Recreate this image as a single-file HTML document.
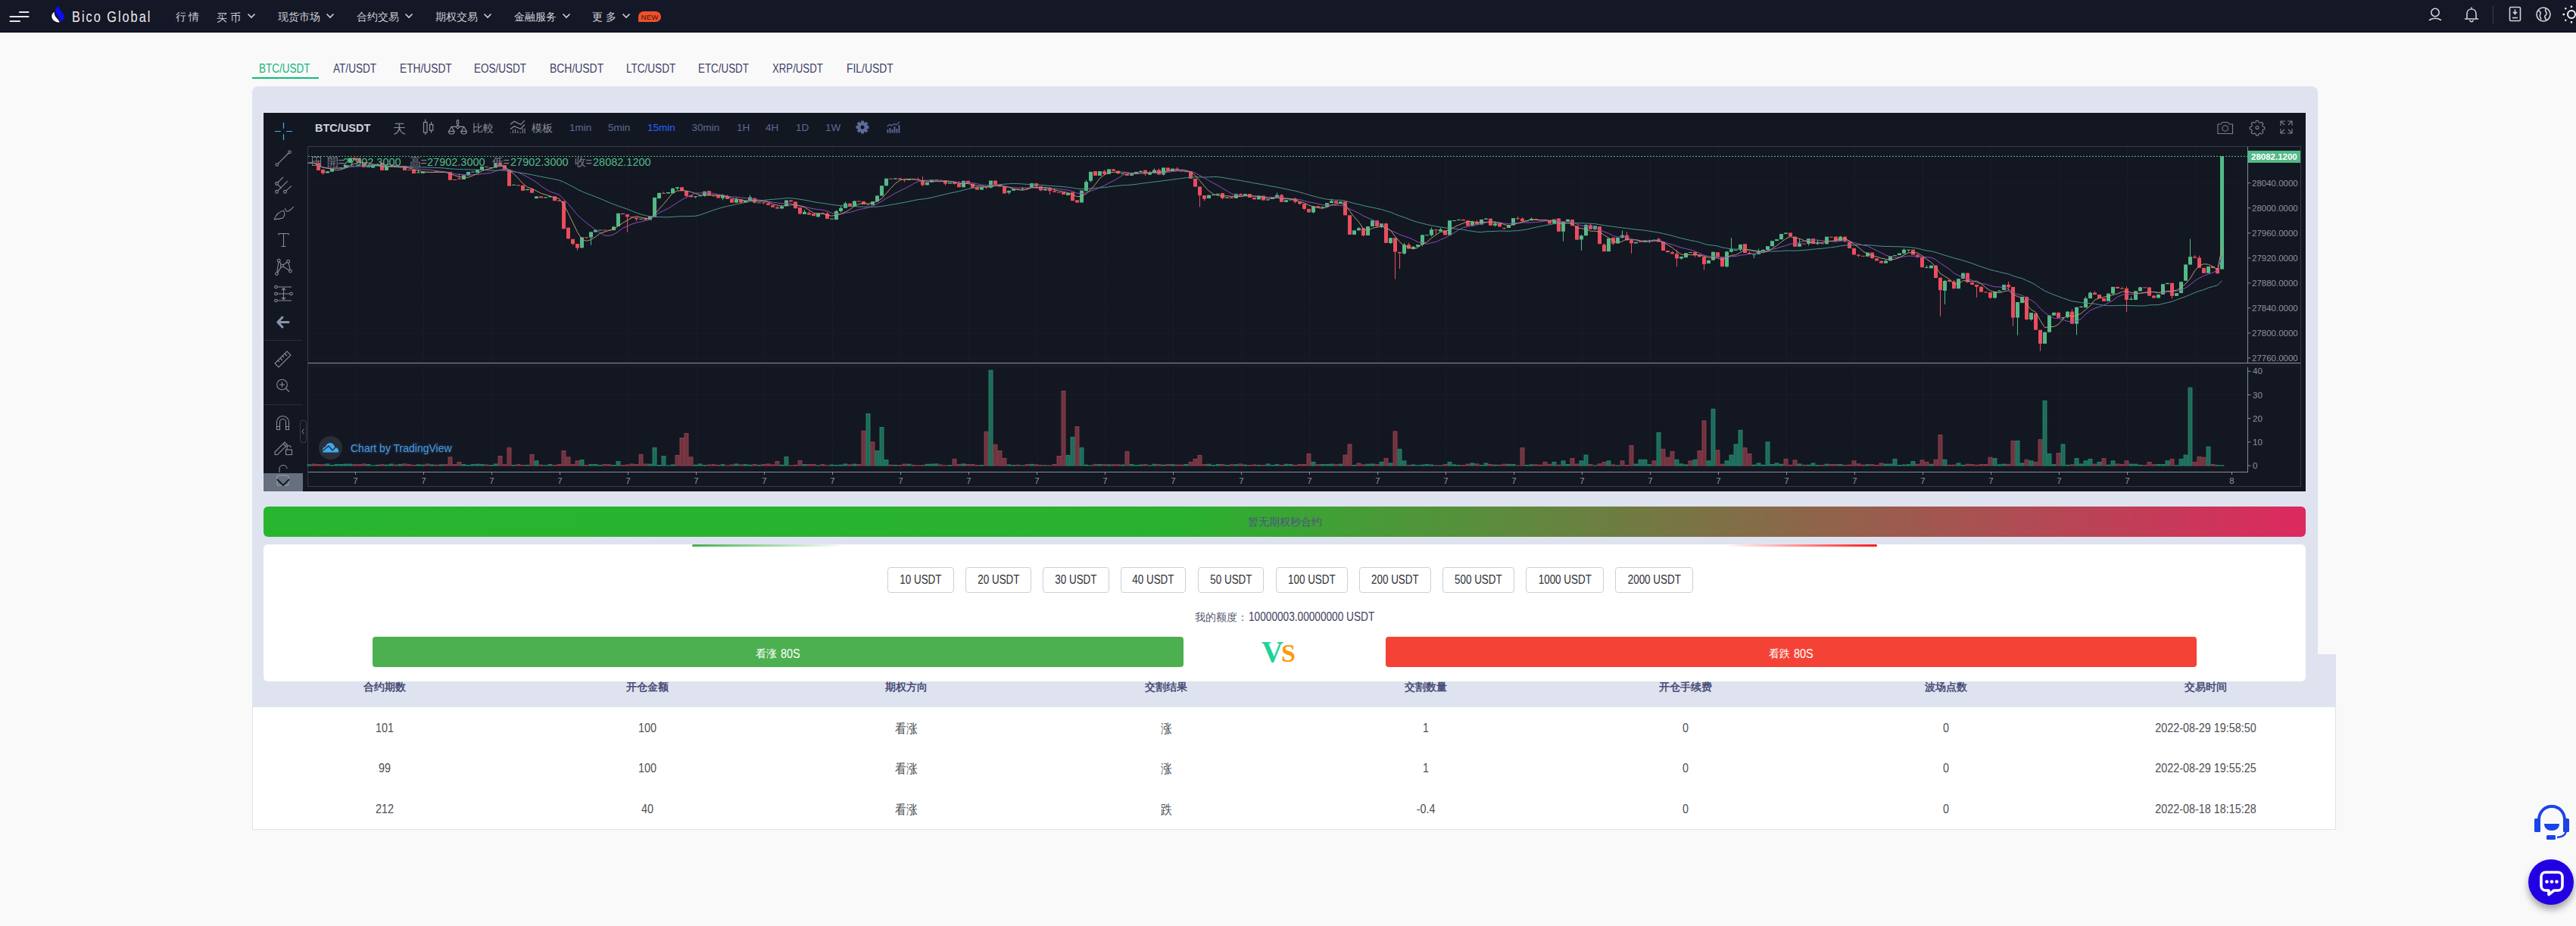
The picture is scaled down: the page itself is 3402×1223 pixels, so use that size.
<!DOCTYPE html><html><head><meta charset="utf-8"><title>Bico Global</title><style>
*{margin:0;padding:0;box-sizing:content-box}
html,body{width:3402px;height:1223px;overflow:hidden;background:#f9f9f9}
body{position:relative;font-family:"Liberation Sans",sans-serif}
#hdr{position:absolute;left:0;top:0;width:3402px;height:42px;background:#141726;border-bottom:1px solid #020514;box-shadow:0 1px 0 #ffffff}
.t{position:absolute;white-space:nowrap;line-height:1.2}
.nav{font-size:14px;color:#cdcfd4}
.tab{top:81px;font-size:13.5px}
.btn{position:absolute;top:749px;height:32px;border:1px solid #cdd0da;border-radius:4px;font-size:16px;line-height:32px;text-align:center;color:#2f3136;white-space:nowrap}
.btn span{display:inline-block;transform:scaleX(0.84)}
.bigbtn{position:absolute;top:841px;height:40px;border-radius:4px;color:#fff;font-size:14px;line-height:39px;text-align:center;white-space:nowrap}
.th{position:absolute;top:899px;font-size:14px;font-weight:bold;color:#4a4e78;white-space:nowrap;transform:translateX(-50%)}
.td{position:absolute;font-size:16.5px;color:#4e5056;white-space:nowrap;transform:translateX(-50%) scaleX(0.87)}
</style></head><body><div id="hdr"><svg style="position:absolute;left:12px;top:14px" width="27" height="16" viewBox="0 0 27 16"><g stroke="#e6e6e6" stroke-width="2.2" stroke-linecap="round"><path d="M14 2H25.5"/><path d="M1.5 8H25.5"/><path d="M1.5 14H14"/></g></svg><svg style="position:absolute;left:60px;top:2px" width="40" height="40" viewBox="0 0 40 40"><path d="M17.3 5.6C14 8 12.5 11 13.3 14C14 17 18 20 19 23.5C19.5 25 19.2 26.5 19 27.2C22 26 25.5 23 24.8 19.5C24 16 18.5 12 17.3 5.6Z" fill="#0d0dfa"/><path d="M11.7 13.8C9 15.5 8 18 8.4 20.5C9 24.5 13 27.5 18.5 27.6C18.3 25.5 16.5 23.5 14.5 21.5C12.5 19.5 11.5 17 11.7 13.8Z" fill="#ffffff"/></svg><svg style="position:absolute;left:326px;top:17px" width="12" height="8" viewBox="0 0 12 8"><path d="M1.5 1.5L6 6L10.5 1.5" fill="none" stroke="#cfd0d4" stroke-width="1.6"/></svg><svg style="position:absolute;left:430px;top:17px" width="12" height="8" viewBox="0 0 12 8"><path d="M1.5 1.5L6 6L10.5 1.5" fill="none" stroke="#cfd0d4" stroke-width="1.6"/></svg><svg style="position:absolute;left:534px;top:17px" width="12" height="8" viewBox="0 0 12 8"><path d="M1.5 1.5L6 6L10.5 1.5" fill="none" stroke="#cfd0d4" stroke-width="1.6"/></svg><svg style="position:absolute;left:638px;top:17px" width="12" height="8" viewBox="0 0 12 8"><path d="M1.5 1.5L6 6L10.5 1.5" fill="none" stroke="#cfd0d4" stroke-width="1.6"/></svg><svg style="position:absolute;left:742px;top:17px" width="12" height="8" viewBox="0 0 12 8"><path d="M1.5 1.5L6 6L10.5 1.5" fill="none" stroke="#cfd0d4" stroke-width="1.6"/></svg><svg style="position:absolute;left:821px;top:17px" width="12" height="8" viewBox="0 0 12 8"><path d="M1.5 1.5L6 6L10.5 1.5" fill="none" stroke="#cfd0d4" stroke-width="1.6"/></svg><div style="position:absolute;left:843px;top:15px;width:30px;height:14px;background:#f0502a;border-radius:7px 7px 7px 1px;font:9.5px/15.5px 'Liberation Sans',sans-serif;color:#3a140c;text-align:center;letter-spacing:0.2px">NEW</div><svg style="position:absolute;left:3205px;top:8px" width="22" height="22" viewBox="0 0 22 22"><circle cx="11" cy="8.5" r="5.2" fill="none" stroke="#d2d2d2" stroke-width="1.6" stroke-width="1.8"/><path d="M3.5 18.5C7.5 15.5 14.5 15.5 18.5 18.5" fill="none" stroke="#d2d2d2" stroke-width="1.6" stroke-width="1.8" stroke-linecap="round"/></svg><svg style="position:absolute;left:3253px;top:8px" width="22" height="22" viewBox="0 0 22 22"><path d="M5 17V10C5 6 8 4 11 4C14 4 17 6 17 10V17" fill="none" stroke="#d2d2d2" stroke-width="1.6"/><path d="M2.5 17H19.5" fill="none" stroke="#d2d2d2" stroke-width="1.6" stroke-linecap="round"/><path d="M8.5 18.5C9 20 10 20.7 11 20.7C12 20.7 13 20 13.5 18.5" fill="none" stroke="#d2d2d2" stroke-width="1.6"/><circle cx="11" cy="2.5" r="1" fill="#d2d2d2"/></svg><div style="position:absolute;left:3292px;top:7px;width:1px;height:24px;background:#3a3d4d"></div><svg style="position:absolute;left:3312px;top:8px" width="20" height="22" viewBox="0 0 20 22"><rect x="2.5" y="1.5" width="14" height="18" rx="1.5" fill="none" stroke="#d2d2d2" stroke-width="1.6"/><path d="M6 15.5H13" fill="none" stroke="#d2d2d2" stroke-width="1.6"/><path d="M9.5 4.5V10M7 7.8L9.5 10.5L12 7.8" fill="none" stroke="#d2d2d2" stroke-width="1.6"/></svg><svg style="position:absolute;left:3348px;top:8px" width="22" height="22" viewBox="0 0 22 22"><circle cx="11" cy="11" r="9" fill="none" stroke="#d2d2d2" stroke-width="1.6"/><path d="M4 6C7 7 8 9 6.5 11.5C5.5 13.5 7 15 8 17.5" fill="none" stroke="#d2d2d2" stroke-width="1.6"/><path d="M14.5 2.8C13 5 13.5 7 15 8.5C16 9.5 14.5 12 13 13C12 15 14 17 15.5 19" fill="none" stroke="#d2d2d2" stroke-width="1.6"/></svg><svg style="position:absolute;left:3384px;top:7px" width="24" height="24" viewBox="0 0 24 24"><circle cx="12" cy="12" r="5" fill="none" stroke="#f0f0f0" stroke-width="2"/><g fill="#f0f0f0"><rect x="10.8" y="0.5" width="2.4" height="2.6" rx="0.6"/><rect x="10.8" y="20.9" width="2.4" height="2.6" rx="0.6"/><rect x="0.5" y="10.8" width="2.6" height="2.4" rx="0.6"/><rect x="20.9" y="10.8" width="2.6" height="2.4" rx="0.6"/><circle cx="4.3" cy="4.3" r="1.2"/><circle cx="19.7" cy="4.3" r="1.2"/><circle cx="4.3" cy="19.7" r="1.2"/><circle cx="19.7" cy="19.7" r="1.2"/></g></svg></div><div style="position:absolute;left:333px;top:102px;width:88px;height:2px;background:#0ebc7a"></div><div style="position:absolute;left:333px;top:114px;width:2728px;height:750px;background:#dfe3ef;border-radius:8px 8px 0 0"></div><div style="position:absolute;left:347px;top:148px;width:2699px;height:502px;background:#e8ebf6"></div><div style="position:absolute;left:333px;top:864px;width:2752px;height:70px;background:#dfe3ef"></div><div style="position:absolute;left:333px;top:934px;width:2750px;height:161px;background:#fff;border:1px solid #dfe3ef;border-top:none"></div><svg id="chart" width="2697" height="500" viewBox="348 149 2697 500" style="position:absolute;left:348px;top:149px"><rect x="348" y="149" width="2697" height="500" fill="#131722"/><path d="M469.5 194V623 M559.5 194V623 M649.5 194V623 M739.5 194V623 M829.5 194V623 M919.5 194V623 M1009.5 194V623 M1099.5 194V623 M1189.5 194V623 M1279.5 194V623 M1369.5 194V623 M1459.5 194V623 M1549.5 194V623 M1639.5 194V623 M1729.5 194V623 M1819.5 194V623 M1909.5 194V623 M1999.5 194V623 M2089.5 194V623 M2179.5 194V623 M2269.5 194V623 M2359.5 194V623 M2449.5 194V623 M2539.5 194V623 M2629.5 194V623 M2719.5 194V623 M2809.5 194V623 M2899.5 194V623 M407 241.7H2968 M407 274.7H2968 M407 307.8H2968 M407 340.8H2968 M407 373.8H2968 M407 406.8H2968 M407 439.9H2968 M407 472.9H2968 M407 490.3H2968 M407 521.5H2968 M407 552.6H2968 M407 583.8H2968" stroke="#181c28" stroke-width="1"/><rect x="406.5" y="193.5" width="2632" height="449" fill="none" stroke="#363a48" stroke-width="1"/><path d="M2968.5 194V623.5" stroke="#8a8d96" stroke-width="1"/><path d="M407 623.5H2968.5" stroke="#8a8d96" stroke-width="1"/><path d="M407 479.5H3038" stroke="#8f929b" stroke-width="1"/><rect x="407" y="480" width="2631" height="5" fill="#171b27"/><path d="M407 206.5H2968" stroke="#53b987" stroke-width="1" stroke-dasharray="2 2"/><g><rect x="406.0" y="613.8" width="5" height="1.2" fill="#1d6b59" stroke="#2a9273" stroke-width="0.8"/><rect x="412.0" y="613.0" width="5" height="2.0" fill="#6d3340" stroke="#a2454f" stroke-width="0.8"/><rect x="418.0" y="613.5" width="5" height="1.5" fill="#6d3340" stroke="#a2454f" stroke-width="0.8"/><rect x="424.0" y="613.7" width="5" height="1.3" fill="#6d3340" stroke="#a2454f" stroke-width="0.8"/><rect x="430.0" y="612.9" width="5" height="2.1" fill="#1d6b59" stroke="#2a9273" stroke-width="0.8"/><rect x="436.0" y="614.6" width="5" height="0.4" fill="#1d6b59" stroke="#2a9273" stroke-width="0.8"/><rect x="442.0" y="613.3" width="5" height="1.7" fill="#1d6b59" stroke="#2a9273" stroke-width="0.8"/><rect x="448.0" y="613.5" width="5" height="1.5" fill="#1d6b59" stroke="#2a9273" stroke-width="0.8"/><rect x="454.0" y="613.0" width="5" height="2.0" fill="#1d6b59" stroke="#2a9273" stroke-width="0.8"/><rect x="460.0" y="613.1" width="5" height="1.9" fill="#1d6b59" stroke="#2a9273" stroke-width="0.8"/><rect x="466.0" y="613.7" width="5" height="1.3" fill="#6d3340" stroke="#a2454f" stroke-width="0.8"/><rect x="472.0" y="613.4" width="5" height="1.6" fill="#6d3340" stroke="#a2454f" stroke-width="0.8"/><rect x="478.0" y="612.9" width="5" height="2.1" fill="#6d3340" stroke="#a2454f" stroke-width="0.8"/><rect x="484.0" y="613.5" width="5" height="1.5" fill="#1d6b59" stroke="#2a9273" stroke-width="0.8"/><rect x="490.0" y="614.8" width="5" height="0.2" fill="#1d6b59" stroke="#2a9273" stroke-width="0.8"/><rect x="496.0" y="614.2" width="5" height="0.8" fill="#1d6b59" stroke="#2a9273" stroke-width="0.8"/><rect x="502.0" y="613.3" width="5" height="1.7" fill="#6d3340" stroke="#a2454f" stroke-width="0.8"/><rect x="508.0" y="614.1" width="5" height="0.9" fill="#1d6b59" stroke="#2a9273" stroke-width="0.8"/><rect x="514.0" y="613.0" width="5" height="2.0" fill="#1d6b59" stroke="#2a9273" stroke-width="0.8"/><rect x="520.0" y="614.0" width="5" height="1.0" fill="#6d3340" stroke="#a2454f" stroke-width="0.8"/><rect x="526.0" y="613.3" width="5" height="1.7" fill="#1d6b59" stroke="#2a9273" stroke-width="0.8"/><rect x="532.0" y="612.8" width="5" height="2.2" fill="#6d3340" stroke="#a2454f" stroke-width="0.8"/><rect x="538.0" y="613.6" width="5" height="1.4" fill="#6d3340" stroke="#a2454f" stroke-width="0.8"/><rect x="544.0" y="614.4" width="5" height="0.6" fill="#6d3340" stroke="#a2454f" stroke-width="0.8"/><rect x="550.0" y="613.8" width="5" height="1.2" fill="#1d6b59" stroke="#2a9273" stroke-width="0.8"/><rect x="556.0" y="614.1" width="5" height="0.9" fill="#1d6b59" stroke="#2a9273" stroke-width="0.8"/><rect x="562.0" y="612.9" width="5" height="2.1" fill="#6d3340" stroke="#a2454f" stroke-width="0.8"/><rect x="568.0" y="613.9" width="5" height="1.1" fill="#1d6b59" stroke="#2a9273" stroke-width="0.8"/><rect x="574.0" y="614.2" width="5" height="0.8" fill="#6d3340" stroke="#a2454f" stroke-width="0.8"/><rect x="580.0" y="613.8" width="5" height="1.2" fill="#1d6b59" stroke="#2a9273" stroke-width="0.8"/><rect x="586.0" y="613.4" width="5" height="1.6" fill="#6d3340" stroke="#a2454f" stroke-width="0.8"/><rect x="592.0" y="603.8" width="5" height="11.2" fill="#6d3340" stroke="#a2454f" stroke-width="0.8"/><rect x="598.0" y="613.6" width="5" height="1.4" fill="#6d3340" stroke="#a2454f" stroke-width="0.8"/><rect x="604.0" y="610.3" width="5" height="4.7" fill="#6d3340" stroke="#a2454f" stroke-width="0.8"/><rect x="610.0" y="613.5" width="5" height="1.5" fill="#1d6b59" stroke="#2a9273" stroke-width="0.8"/><rect x="616.0" y="614.4" width="5" height="0.6" fill="#1d6b59" stroke="#2a9273" stroke-width="0.8"/><rect x="622.0" y="613.5" width="5" height="1.5" fill="#1d6b59" stroke="#2a9273" stroke-width="0.8"/><rect x="628.0" y="613.1" width="5" height="1.9" fill="#1d6b59" stroke="#2a9273" stroke-width="0.8"/><rect x="634.0" y="613.3" width="5" height="1.7" fill="#1d6b59" stroke="#2a9273" stroke-width="0.8"/><rect x="640.0" y="613.9" width="5" height="1.1" fill="#6d3340" stroke="#a2454f" stroke-width="0.8"/><rect x="646.0" y="614.5" width="5" height="0.5" fill="#1d6b59" stroke="#2a9273" stroke-width="0.8"/><rect x="652.0" y="612.9" width="5" height="2.1" fill="#1d6b59" stroke="#2a9273" stroke-width="0.8"/><rect x="658.0" y="602.5" width="5" height="12.5" fill="#6d3340" stroke="#a2454f" stroke-width="0.8"/><rect x="664.0" y="613.7" width="5" height="1.3" fill="#6d3340" stroke="#a2454f" stroke-width="0.8"/><rect x="670.0" y="591.3" width="5" height="23.7" fill="#6d3340" stroke="#a2454f" stroke-width="0.8"/><rect x="676.0" y="614.5" width="5" height="0.5" fill="#1d6b59" stroke="#2a9273" stroke-width="0.8"/><rect x="682.0" y="613.3" width="5" height="1.7" fill="#6d3340" stroke="#a2454f" stroke-width="0.8"/><rect x="688.0" y="614.4" width="5" height="0.6" fill="#6d3340" stroke="#a2454f" stroke-width="0.8"/><rect x="694.0" y="614.3" width="5" height="0.7" fill="#1d6b59" stroke="#2a9273" stroke-width="0.8"/><rect x="700.0" y="600.3" width="5" height="14.7" fill="#6d3340" stroke="#a2454f" stroke-width="0.8"/><rect x="706.0" y="608.8" width="5" height="6.2" fill="#1d6b59" stroke="#2a9273" stroke-width="0.8"/><rect x="712.0" y="614.1" width="5" height="0.9" fill="#6d3340" stroke="#a2454f" stroke-width="0.8"/><rect x="718.0" y="614.7" width="5" height="0.3" fill="#1d6b59" stroke="#2a9273" stroke-width="0.8"/><rect x="724.0" y="613.6" width="5" height="1.4" fill="#1d6b59" stroke="#2a9273" stroke-width="0.8"/><rect x="730.0" y="614.6" width="5" height="0.4" fill="#6d3340" stroke="#a2454f" stroke-width="0.8"/><rect x="736.0" y="613.5" width="5" height="1.5" fill="#6d3340" stroke="#a2454f" stroke-width="0.8"/><rect x="742.0" y="595.4" width="5" height="19.6" fill="#6d3340" stroke="#a2454f" stroke-width="0.8"/><rect x="748.0" y="603.8" width="5" height="11.2" fill="#6d3340" stroke="#a2454f" stroke-width="0.8"/><rect x="754.0" y="613.4" width="5" height="1.6" fill="#6d3340" stroke="#a2454f" stroke-width="0.8"/><rect x="760.0" y="608.8" width="5" height="6.2" fill="#6d3340" stroke="#a2454f" stroke-width="0.8"/><rect x="766.0" y="607.5" width="5" height="7.5" fill="#1d6b59" stroke="#2a9273" stroke-width="0.8"/><rect x="772.0" y="614.6" width="5" height="0.4" fill="#6d3340" stroke="#a2454f" stroke-width="0.8"/><rect x="778.0" y="613.5" width="5" height="1.5" fill="#1d6b59" stroke="#2a9273" stroke-width="0.8"/><rect x="784.0" y="613.4" width="5" height="1.6" fill="#1d6b59" stroke="#2a9273" stroke-width="0.8"/><rect x="790.0" y="614.6" width="5" height="0.4" fill="#1d6b59" stroke="#2a9273" stroke-width="0.8"/><rect x="796.0" y="613.4" width="5" height="1.6" fill="#6d3340" stroke="#a2454f" stroke-width="0.8"/><rect x="802.0" y="613.7" width="5" height="1.3" fill="#6d3340" stroke="#a2454f" stroke-width="0.8"/><rect x="808.0" y="614.4" width="5" height="0.6" fill="#1d6b59" stroke="#2a9273" stroke-width="0.8"/><rect x="814.0" y="609.4" width="5" height="5.6" fill="#1d6b59" stroke="#2a9273" stroke-width="0.8"/><rect x="820.0" y="614.6" width="5" height="0.4" fill="#6d3340" stroke="#a2454f" stroke-width="0.8"/><rect x="826.0" y="614.0" width="5" height="1.0" fill="#6d3340" stroke="#a2454f" stroke-width="0.8"/><rect x="832.0" y="612.9" width="5" height="2.1" fill="#6d3340" stroke="#a2454f" stroke-width="0.8"/><rect x="838.0" y="613.5" width="5" height="1.5" fill="#6d3340" stroke="#a2454f" stroke-width="0.8"/><rect x="844.0" y="600.3" width="5" height="14.7" fill="#6d3340" stroke="#a2454f" stroke-width="0.8"/><rect x="850.0" y="612.9" width="5" height="2.1" fill="#6d3340" stroke="#a2454f" stroke-width="0.8"/><rect x="856.0" y="613.1" width="5" height="1.9" fill="#1d6b59" stroke="#2a9273" stroke-width="0.8"/><rect x="862.0" y="591.3" width="5" height="23.7" fill="#1d6b59" stroke="#2a9273" stroke-width="0.8"/><rect x="868.0" y="614.4" width="5" height="0.6" fill="#1d6b59" stroke="#2a9273" stroke-width="0.8"/><rect x="874.0" y="602.5" width="5" height="12.5" fill="#1d6b59" stroke="#2a9273" stroke-width="0.8"/><rect x="880.0" y="614.8" width="5" height="0.2" fill="#1d6b59" stroke="#2a9273" stroke-width="0.8"/><rect x="886.0" y="613.9" width="5" height="1.1" fill="#1d6b59" stroke="#2a9273" stroke-width="0.8"/><rect x="892.0" y="601.3" width="5" height="13.7" fill="#6d3340" stroke="#a2454f" stroke-width="0.8"/><rect x="898.0" y="578.5" width="5" height="36.5" fill="#6d3340" stroke="#a2454f" stroke-width="0.8"/><rect x="904.0" y="572.6" width="5" height="42.4" fill="#6d3340" stroke="#a2454f" stroke-width="0.8"/><rect x="910.0" y="603.8" width="5" height="11.2" fill="#6d3340" stroke="#a2454f" stroke-width="0.8"/><rect x="916.0" y="614.2" width="5" height="0.8" fill="#1d6b59" stroke="#2a9273" stroke-width="0.8"/><rect x="922.0" y="612.9" width="5" height="2.1" fill="#1d6b59" stroke="#2a9273" stroke-width="0.8"/><rect x="928.0" y="614.5" width="5" height="0.5" fill="#1d6b59" stroke="#2a9273" stroke-width="0.8"/><rect x="934.0" y="613.9" width="5" height="1.1" fill="#6d3340" stroke="#a2454f" stroke-width="0.8"/><rect x="940.0" y="613.7" width="5" height="1.3" fill="#6d3340" stroke="#a2454f" stroke-width="0.8"/><rect x="946.0" y="614.3" width="5" height="0.7" fill="#6d3340" stroke="#a2454f" stroke-width="0.8"/><rect x="952.0" y="613.7" width="5" height="1.3" fill="#1d6b59" stroke="#2a9273" stroke-width="0.8"/><rect x="958.0" y="614.8" width="5" height="0.2" fill="#6d3340" stroke="#a2454f" stroke-width="0.8"/><rect x="964.0" y="613.9" width="5" height="1.1" fill="#6d3340" stroke="#a2454f" stroke-width="0.8"/><rect x="970.0" y="612.9" width="5" height="2.1" fill="#1d6b59" stroke="#2a9273" stroke-width="0.8"/><rect x="976.0" y="613.9" width="5" height="1.1" fill="#6d3340" stroke="#a2454f" stroke-width="0.8"/><rect x="982.0" y="613.3" width="5" height="1.7" fill="#1d6b59" stroke="#2a9273" stroke-width="0.8"/><rect x="988.0" y="614.2" width="5" height="0.8" fill="#1d6b59" stroke="#2a9273" stroke-width="0.8"/><rect x="994.0" y="613.3" width="5" height="1.7" fill="#6d3340" stroke="#a2454f" stroke-width="0.8"/><rect x="1000.0" y="614.3" width="5" height="0.7" fill="#1d6b59" stroke="#2a9273" stroke-width="0.8"/><rect x="1006.0" y="613.5" width="5" height="1.5" fill="#6d3340" stroke="#a2454f" stroke-width="0.8"/><rect x="1012.0" y="612.9" width="5" height="2.1" fill="#6d3340" stroke="#a2454f" stroke-width="0.8"/><rect x="1018.0" y="613.9" width="5" height="1.1" fill="#6d3340" stroke="#a2454f" stroke-width="0.8"/><rect x="1024.0" y="609.4" width="5" height="5.6" fill="#6d3340" stroke="#a2454f" stroke-width="0.8"/><rect x="1030.0" y="614.2" width="5" height="0.8" fill="#1d6b59" stroke="#2a9273" stroke-width="0.8"/><rect x="1036.0" y="603.5" width="5" height="11.5" fill="#1d6b59" stroke="#2a9273" stroke-width="0.8"/><rect x="1042.0" y="614.7" width="5" height="0.3" fill="#6d3340" stroke="#a2454f" stroke-width="0.8"/><rect x="1048.0" y="614.3" width="5" height="0.7" fill="#6d3340" stroke="#a2454f" stroke-width="0.8"/><rect x="1054.0" y="608.5" width="5" height="6.5" fill="#6d3340" stroke="#a2454f" stroke-width="0.8"/><rect x="1060.0" y="613.4" width="5" height="1.6" fill="#1d6b59" stroke="#2a9273" stroke-width="0.8"/><rect x="1066.0" y="613.4" width="5" height="1.6" fill="#6d3340" stroke="#a2454f" stroke-width="0.8"/><rect x="1072.0" y="613.5" width="5" height="1.5" fill="#6d3340" stroke="#a2454f" stroke-width="0.8"/><rect x="1078.0" y="614.7" width="5" height="0.3" fill="#1d6b59" stroke="#2a9273" stroke-width="0.8"/><rect x="1084.0" y="613.3" width="5" height="1.7" fill="#6d3340" stroke="#a2454f" stroke-width="0.8"/><rect x="1090.0" y="614.8" width="5" height="0.2" fill="#6d3340" stroke="#a2454f" stroke-width="0.8"/><rect x="1096.0" y="614.0" width="5" height="1.0" fill="#1d6b59" stroke="#2a9273" stroke-width="0.8"/><rect x="1102.0" y="614.6" width="5" height="0.4" fill="#1d6b59" stroke="#2a9273" stroke-width="0.8"/><rect x="1108.0" y="614.1" width="5" height="0.9" fill="#1d6b59" stroke="#2a9273" stroke-width="0.8"/><rect x="1114.0" y="612.9" width="5" height="2.1" fill="#1d6b59" stroke="#2a9273" stroke-width="0.8"/><rect x="1120.0" y="613.8" width="5" height="1.2" fill="#6d3340" stroke="#a2454f" stroke-width="0.8"/><rect x="1126.0" y="613.0" width="5" height="2.0" fill="#1d6b59" stroke="#2a9273" stroke-width="0.8"/><rect x="1132.0" y="613.5" width="5" height="1.5" fill="#6d3340" stroke="#a2454f" stroke-width="0.8"/><rect x="1138.0" y="569.2" width="5" height="45.8" fill="#6d3340" stroke="#a2454f" stroke-width="0.8"/><rect x="1144.0" y="546.4" width="5" height="68.6" fill="#1d6b59" stroke="#2a9273" stroke-width="0.8"/><rect x="1150.0" y="583.8" width="5" height="31.2" fill="#6d3340" stroke="#a2454f" stroke-width="0.8"/><rect x="1156.0" y="595.4" width="5" height="19.6" fill="#1d6b59" stroke="#2a9273" stroke-width="0.8"/><rect x="1162.0" y="564.5" width="5" height="50.5" fill="#1d6b59" stroke="#2a9273" stroke-width="0.8"/><rect x="1168.0" y="607.5" width="5" height="7.5" fill="#1d6b59" stroke="#2a9273" stroke-width="0.8"/><rect x="1174.0" y="614.1" width="5" height="0.9" fill="#6d3340" stroke="#a2454f" stroke-width="0.8"/><rect x="1180.0" y="614.4" width="5" height="0.6" fill="#1d6b59" stroke="#2a9273" stroke-width="0.8"/><rect x="1186.0" y="614.6" width="5" height="0.4" fill="#6d3340" stroke="#a2454f" stroke-width="0.8"/><rect x="1192.0" y="613.0" width="5" height="2.0" fill="#6d3340" stroke="#a2454f" stroke-width="0.8"/><rect x="1198.0" y="613.1" width="5" height="1.9" fill="#1d6b59" stroke="#2a9273" stroke-width="0.8"/><rect x="1204.0" y="614.3" width="5" height="0.7" fill="#6d3340" stroke="#a2454f" stroke-width="0.8"/><rect x="1210.0" y="614.7" width="5" height="0.3" fill="#6d3340" stroke="#a2454f" stroke-width="0.8"/><rect x="1216.0" y="614.6" width="5" height="0.4" fill="#6d3340" stroke="#a2454f" stroke-width="0.8"/><rect x="1222.0" y="613.2" width="5" height="1.8" fill="#1d6b59" stroke="#2a9273" stroke-width="0.8"/><rect x="1228.0" y="613.0" width="5" height="2.0" fill="#1d6b59" stroke="#2a9273" stroke-width="0.8"/><rect x="1234.0" y="612.8" width="5" height="2.2" fill="#1d6b59" stroke="#2a9273" stroke-width="0.8"/><rect x="1240.0" y="614.0" width="5" height="1.0" fill="#6d3340" stroke="#a2454f" stroke-width="0.8"/><rect x="1246.0" y="614.7" width="5" height="0.3" fill="#6d3340" stroke="#a2454f" stroke-width="0.8"/><rect x="1252.0" y="614.4" width="5" height="0.6" fill="#1d6b59" stroke="#2a9273" stroke-width="0.8"/><rect x="1258.0" y="606.3" width="5" height="8.7" fill="#6d3340" stroke="#a2454f" stroke-width="0.8"/><rect x="1264.0" y="613.4" width="5" height="1.6" fill="#6d3340" stroke="#a2454f" stroke-width="0.8"/><rect x="1270.0" y="612.8" width="5" height="2.2" fill="#1d6b59" stroke="#2a9273" stroke-width="0.8"/><rect x="1276.0" y="613.6" width="5" height="1.4" fill="#6d3340" stroke="#a2454f" stroke-width="0.8"/><rect x="1282.0" y="613.6" width="5" height="1.4" fill="#6d3340" stroke="#a2454f" stroke-width="0.8"/><rect x="1288.0" y="614.6" width="5" height="0.4" fill="#6d3340" stroke="#a2454f" stroke-width="0.8"/><rect x="1294.0" y="614.4" width="5" height="0.6" fill="#1d6b59" stroke="#2a9273" stroke-width="0.8"/><rect x="1300.0" y="570.1" width="5" height="44.9" fill="#6d3340" stroke="#a2454f" stroke-width="0.8"/><rect x="1306.0" y="489.1" width="5" height="125.9" fill="#1d6b59" stroke="#2a9273" stroke-width="0.8"/><rect x="1312.0" y="587.3" width="5" height="27.7" fill="#6d3340" stroke="#a2454f" stroke-width="0.8"/><rect x="1318.0" y="595.4" width="5" height="19.6" fill="#6d3340" stroke="#a2454f" stroke-width="0.8"/><rect x="1324.0" y="605.3" width="5" height="9.7" fill="#6d3340" stroke="#a2454f" stroke-width="0.8"/><rect x="1330.0" y="613.9" width="5" height="1.1" fill="#1d6b59" stroke="#2a9273" stroke-width="0.8"/><rect x="1336.0" y="614.4" width="5" height="0.6" fill="#1d6b59" stroke="#2a9273" stroke-width="0.8"/><rect x="1342.0" y="614.1" width="5" height="0.9" fill="#6d3340" stroke="#a2454f" stroke-width="0.8"/><rect x="1348.0" y="614.8" width="5" height="0.2" fill="#1d6b59" stroke="#2a9273" stroke-width="0.8"/><rect x="1354.0" y="613.6" width="5" height="1.4" fill="#6d3340" stroke="#a2454f" stroke-width="0.8"/><rect x="1360.0" y="613.2" width="5" height="1.8" fill="#1d6b59" stroke="#2a9273" stroke-width="0.8"/><rect x="1366.0" y="613.8" width="5" height="1.2" fill="#6d3340" stroke="#a2454f" stroke-width="0.8"/><rect x="1372.0" y="614.6" width="5" height="0.4" fill="#6d3340" stroke="#a2454f" stroke-width="0.8"/><rect x="1378.0" y="614.7" width="5" height="0.3" fill="#1d6b59" stroke="#2a9273" stroke-width="0.8"/><rect x="1384.0" y="614.7" width="5" height="0.3" fill="#6d3340" stroke="#a2454f" stroke-width="0.8"/><rect x="1390.0" y="613.4" width="5" height="1.6" fill="#6d3340" stroke="#a2454f" stroke-width="0.8"/><rect x="1396.0" y="602.5" width="5" height="12.5" fill="#6d3340" stroke="#a2454f" stroke-width="0.8"/><rect x="1402.0" y="516.5" width="5" height="98.5" fill="#6d3340" stroke="#a2454f" stroke-width="0.8"/><rect x="1408.0" y="601.3" width="5" height="13.7" fill="#1d6b59" stroke="#2a9273" stroke-width="0.8"/><rect x="1414.0" y="577.3" width="5" height="37.7" fill="#1d6b59" stroke="#2a9273" stroke-width="0.8"/><rect x="1420.0" y="563.6" width="5" height="51.4" fill="#6d3340" stroke="#a2454f" stroke-width="0.8"/><rect x="1426.0" y="591.3" width="5" height="23.7" fill="#1d6b59" stroke="#2a9273" stroke-width="0.8"/><rect x="1432.0" y="614.1" width="5" height="0.9" fill="#1d6b59" stroke="#2a9273" stroke-width="0.8"/><rect x="1438.0" y="614.8" width="5" height="0.2" fill="#1d6b59" stroke="#2a9273" stroke-width="0.8"/><rect x="1444.0" y="613.2" width="5" height="1.8" fill="#6d3340" stroke="#a2454f" stroke-width="0.8"/><rect x="1450.0" y="613.5" width="5" height="1.5" fill="#1d6b59" stroke="#2a9273" stroke-width="0.8"/><rect x="1456.0" y="613.7" width="5" height="1.3" fill="#6d3340" stroke="#a2454f" stroke-width="0.8"/><rect x="1462.0" y="613.9" width="5" height="1.1" fill="#1d6b59" stroke="#2a9273" stroke-width="0.8"/><rect x="1468.0" y="613.7" width="5" height="1.3" fill="#6d3340" stroke="#a2454f" stroke-width="0.8"/><rect x="1474.0" y="613.8" width="5" height="1.2" fill="#6d3340" stroke="#a2454f" stroke-width="0.8"/><rect x="1480.0" y="614.0" width="5" height="1.0" fill="#1d6b59" stroke="#2a9273" stroke-width="0.8"/><rect x="1486.0" y="596.3" width="5" height="18.7" fill="#6d3340" stroke="#a2454f" stroke-width="0.8"/><rect x="1492.0" y="613.6" width="5" height="1.4" fill="#1d6b59" stroke="#2a9273" stroke-width="0.8"/><rect x="1498.0" y="614.5" width="5" height="0.5" fill="#1d6b59" stroke="#2a9273" stroke-width="0.8"/><rect x="1504.0" y="614.0" width="5" height="1.0" fill="#1d6b59" stroke="#2a9273" stroke-width="0.8"/><rect x="1510.0" y="613.6" width="5" height="1.4" fill="#6d3340" stroke="#a2454f" stroke-width="0.8"/><rect x="1516.0" y="614.7" width="5" height="0.3" fill="#1d6b59" stroke="#2a9273" stroke-width="0.8"/><rect x="1522.0" y="613.2" width="5" height="1.8" fill="#1d6b59" stroke="#2a9273" stroke-width="0.8"/><rect x="1528.0" y="613.4" width="5" height="1.6" fill="#6d3340" stroke="#a2454f" stroke-width="0.8"/><rect x="1534.0" y="614.2" width="5" height="0.8" fill="#1d6b59" stroke="#2a9273" stroke-width="0.8"/><rect x="1540.0" y="613.5" width="5" height="1.5" fill="#6d3340" stroke="#a2454f" stroke-width="0.8"/><rect x="1546.0" y="613.7" width="5" height="1.3" fill="#1d6b59" stroke="#2a9273" stroke-width="0.8"/><rect x="1552.0" y="614.0" width="5" height="1.0" fill="#6d3340" stroke="#a2454f" stroke-width="0.8"/><rect x="1558.0" y="614.1" width="5" height="0.9" fill="#6d3340" stroke="#a2454f" stroke-width="0.8"/><rect x="1564.0" y="613.5" width="5" height="1.5" fill="#1d6b59" stroke="#2a9273" stroke-width="0.8"/><rect x="1570.0" y="610.3" width="5" height="4.7" fill="#6d3340" stroke="#a2454f" stroke-width="0.8"/><rect x="1576.0" y="606.3" width="5" height="8.7" fill="#6d3340" stroke="#a2454f" stroke-width="0.8"/><rect x="1582.0" y="601.3" width="5" height="13.7" fill="#6d3340" stroke="#a2454f" stroke-width="0.8"/><rect x="1588.0" y="613.6" width="5" height="1.4" fill="#6d3340" stroke="#a2454f" stroke-width="0.8"/><rect x="1594.0" y="613.1" width="5" height="1.9" fill="#1d6b59" stroke="#2a9273" stroke-width="0.8"/><rect x="1600.0" y="614.4" width="5" height="0.6" fill="#1d6b59" stroke="#2a9273" stroke-width="0.8"/><rect x="1606.0" y="613.3" width="5" height="1.7" fill="#1d6b59" stroke="#2a9273" stroke-width="0.8"/><rect x="1612.0" y="613.4" width="5" height="1.6" fill="#6d3340" stroke="#a2454f" stroke-width="0.8"/><rect x="1618.0" y="614.5" width="5" height="0.5" fill="#1d6b59" stroke="#2a9273" stroke-width="0.8"/><rect x="1624.0" y="613.7" width="5" height="1.3" fill="#6d3340" stroke="#a2454f" stroke-width="0.8"/><rect x="1630.0" y="613.7" width="5" height="1.3" fill="#1d6b59" stroke="#2a9273" stroke-width="0.8"/><rect x="1636.0" y="612.9" width="5" height="2.1" fill="#6d3340" stroke="#a2454f" stroke-width="0.8"/><rect x="1642.0" y="614.1" width="5" height="0.9" fill="#1d6b59" stroke="#2a9273" stroke-width="0.8"/><rect x="1648.0" y="614.4" width="5" height="0.6" fill="#6d3340" stroke="#a2454f" stroke-width="0.8"/><rect x="1654.0" y="613.9" width="5" height="1.1" fill="#6d3340" stroke="#a2454f" stroke-width="0.8"/><rect x="1660.0" y="614.3" width="5" height="0.7" fill="#1d6b59" stroke="#2a9273" stroke-width="0.8"/><rect x="1666.0" y="614.4" width="5" height="0.6" fill="#6d3340" stroke="#a2454f" stroke-width="0.8"/><rect x="1672.0" y="612.9" width="5" height="2.1" fill="#1d6b59" stroke="#2a9273" stroke-width="0.8"/><rect x="1678.0" y="614.4" width="5" height="0.6" fill="#1d6b59" stroke="#2a9273" stroke-width="0.8"/><rect x="1684.0" y="613.3" width="5" height="1.7" fill="#1d6b59" stroke="#2a9273" stroke-width="0.8"/><rect x="1690.0" y="614.4" width="5" height="0.6" fill="#6d3340" stroke="#a2454f" stroke-width="0.8"/><rect x="1696.0" y="613.1" width="5" height="1.9" fill="#1d6b59" stroke="#2a9273" stroke-width="0.8"/><rect x="1702.0" y="613.5" width="5" height="1.5" fill="#1d6b59" stroke="#2a9273" stroke-width="0.8"/><rect x="1708.0" y="614.5" width="5" height="0.5" fill="#6d3340" stroke="#a2454f" stroke-width="0.8"/><rect x="1714.0" y="613.5" width="5" height="1.5" fill="#6d3340" stroke="#a2454f" stroke-width="0.8"/><rect x="1720.0" y="613.4" width="5" height="1.6" fill="#6d3340" stroke="#a2454f" stroke-width="0.8"/><rect x="1726.0" y="599.4" width="5" height="15.6" fill="#6d3340" stroke="#a2454f" stroke-width="0.8"/><rect x="1732.0" y="610.3" width="5" height="4.7" fill="#1d6b59" stroke="#2a9273" stroke-width="0.8"/><rect x="1738.0" y="613.7" width="5" height="1.3" fill="#6d3340" stroke="#a2454f" stroke-width="0.8"/><rect x="1744.0" y="613.4" width="5" height="1.6" fill="#1d6b59" stroke="#2a9273" stroke-width="0.8"/><rect x="1750.0" y="613.4" width="5" height="1.6" fill="#1d6b59" stroke="#2a9273" stroke-width="0.8"/><rect x="1756.0" y="613.0" width="5" height="2.0" fill="#1d6b59" stroke="#2a9273" stroke-width="0.8"/><rect x="1762.0" y="613.7" width="5" height="1.3" fill="#6d3340" stroke="#a2454f" stroke-width="0.8"/><rect x="1768.0" y="613.1" width="5" height="1.9" fill="#1d6b59" stroke="#2a9273" stroke-width="0.8"/><rect x="1774.0" y="601.0" width="5" height="14.0" fill="#6d3340" stroke="#a2454f" stroke-width="0.8"/><rect x="1780.0" y="586.9" width="5" height="28.1" fill="#6d3340" stroke="#a2454f" stroke-width="0.8"/><rect x="1786.0" y="614.6" width="5" height="0.4" fill="#1d6b59" stroke="#2a9273" stroke-width="0.8"/><rect x="1792.0" y="611.9" width="5" height="3.1" fill="#6d3340" stroke="#a2454f" stroke-width="0.8"/><rect x="1798.0" y="613.8" width="5" height="1.2" fill="#6d3340" stroke="#a2454f" stroke-width="0.8"/><rect x="1804.0" y="613.1" width="5" height="1.9" fill="#1d6b59" stroke="#2a9273" stroke-width="0.8"/><rect x="1810.0" y="612.9" width="5" height="2.1" fill="#1d6b59" stroke="#2a9273" stroke-width="0.8"/><rect x="1816.0" y="613.6" width="5" height="1.4" fill="#6d3340" stroke="#a2454f" stroke-width="0.8"/><rect x="1822.0" y="610.3" width="5" height="4.7" fill="#1d6b59" stroke="#2a9273" stroke-width="0.8"/><rect x="1828.0" y="605.6" width="5" height="9.4" fill="#6d3340" stroke="#a2454f" stroke-width="0.8"/><rect x="1834.0" y="611.9" width="5" height="3.1" fill="#1d6b59" stroke="#2a9273" stroke-width="0.8"/><rect x="1840.0" y="569.8" width="5" height="45.2" fill="#6d3340" stroke="#a2454f" stroke-width="0.8"/><rect x="1846.0" y="593.2" width="5" height="21.8" fill="#1d6b59" stroke="#2a9273" stroke-width="0.8"/><rect x="1852.0" y="608.8" width="5" height="6.2" fill="#1d6b59" stroke="#2a9273" stroke-width="0.8"/><rect x="1858.0" y="614.5" width="5" height="0.5" fill="#6d3340" stroke="#a2454f" stroke-width="0.8"/><rect x="1864.0" y="613.9" width="5" height="1.1" fill="#1d6b59" stroke="#2a9273" stroke-width="0.8"/><rect x="1870.0" y="614.7" width="5" height="0.3" fill="#1d6b59" stroke="#2a9273" stroke-width="0.8"/><rect x="1876.0" y="614.1" width="5" height="0.9" fill="#1d6b59" stroke="#2a9273" stroke-width="0.8"/><rect x="1882.0" y="613.6" width="5" height="1.4" fill="#1d6b59" stroke="#2a9273" stroke-width="0.8"/><rect x="1888.0" y="614.0" width="5" height="1.0" fill="#1d6b59" stroke="#2a9273" stroke-width="0.8"/><rect x="1894.0" y="614.7" width="5" height="0.3" fill="#6d3340" stroke="#a2454f" stroke-width="0.8"/><rect x="1900.0" y="614.8" width="5" height="0.2" fill="#1d6b59" stroke="#2a9273" stroke-width="0.8"/><rect x="1906.0" y="613.4" width="5" height="1.6" fill="#6d3340" stroke="#a2454f" stroke-width="0.8"/><rect x="1912.0" y="610.3" width="5" height="4.7" fill="#1d6b59" stroke="#2a9273" stroke-width="0.8"/><rect x="1918.0" y="613.9" width="5" height="1.1" fill="#1d6b59" stroke="#2a9273" stroke-width="0.8"/><rect x="1924.0" y="614.6" width="5" height="0.4" fill="#1d6b59" stroke="#2a9273" stroke-width="0.8"/><rect x="1930.0" y="614.6" width="5" height="0.4" fill="#6d3340" stroke="#a2454f" stroke-width="0.8"/><rect x="1936.0" y="613.0" width="5" height="2.0" fill="#6d3340" stroke="#a2454f" stroke-width="0.8"/><rect x="1942.0" y="611.9" width="5" height="3.1" fill="#1d6b59" stroke="#2a9273" stroke-width="0.8"/><rect x="1948.0" y="612.8" width="5" height="2.2" fill="#6d3340" stroke="#a2454f" stroke-width="0.8"/><rect x="1954.0" y="614.4" width="5" height="0.6" fill="#1d6b59" stroke="#2a9273" stroke-width="0.8"/><rect x="1960.0" y="611.9" width="5" height="3.1" fill="#1d6b59" stroke="#2a9273" stroke-width="0.8"/><rect x="1966.0" y="613.4" width="5" height="1.6" fill="#6d3340" stroke="#a2454f" stroke-width="0.8"/><rect x="1972.0" y="614.1" width="5" height="0.9" fill="#1d6b59" stroke="#2a9273" stroke-width="0.8"/><rect x="1978.0" y="614.1" width="5" height="0.9" fill="#6d3340" stroke="#a2454f" stroke-width="0.8"/><rect x="1984.0" y="613.1" width="5" height="1.9" fill="#6d3340" stroke="#a2454f" stroke-width="0.8"/><rect x="1990.0" y="613.2" width="5" height="1.8" fill="#1d6b59" stroke="#2a9273" stroke-width="0.8"/><rect x="1996.0" y="613.4" width="5" height="1.6" fill="#1d6b59" stroke="#2a9273" stroke-width="0.8"/><rect x="2002.0" y="614.8" width="5" height="0.2" fill="#6d3340" stroke="#a2454f" stroke-width="0.8"/><rect x="2008.0" y="591.6" width="5" height="23.4" fill="#6d3340" stroke="#a2454f" stroke-width="0.8"/><rect x="2014.0" y="614.4" width="5" height="0.6" fill="#1d6b59" stroke="#2a9273" stroke-width="0.8"/><rect x="2020.0" y="613.8" width="5" height="1.2" fill="#1d6b59" stroke="#2a9273" stroke-width="0.8"/><rect x="2026.0" y="613.8" width="5" height="1.2" fill="#6d3340" stroke="#a2454f" stroke-width="0.8"/><rect x="2032.0" y="614.1" width="5" height="0.9" fill="#6d3340" stroke="#a2454f" stroke-width="0.8"/><rect x="2038.0" y="610.3" width="5" height="4.7" fill="#6d3340" stroke="#a2454f" stroke-width="0.8"/><rect x="2044.0" y="613.2" width="5" height="1.8" fill="#6d3340" stroke="#a2454f" stroke-width="0.8"/><rect x="2050.0" y="610.3" width="5" height="4.7" fill="#1d6b59" stroke="#2a9273" stroke-width="0.8"/><rect x="2056.0" y="614.1" width="5" height="0.9" fill="#6d3340" stroke="#a2454f" stroke-width="0.8"/><rect x="2062.0" y="608.8" width="5" height="6.2" fill="#1d6b59" stroke="#2a9273" stroke-width="0.8"/><rect x="2068.0" y="613.6" width="5" height="1.4" fill="#1d6b59" stroke="#2a9273" stroke-width="0.8"/><rect x="2074.0" y="605.6" width="5" height="9.4" fill="#6d3340" stroke="#a2454f" stroke-width="0.8"/><rect x="2080.0" y="613.0" width="5" height="2.0" fill="#6d3340" stroke="#a2454f" stroke-width="0.8"/><rect x="2086.0" y="608.8" width="5" height="6.2" fill="#1d6b59" stroke="#2a9273" stroke-width="0.8"/><rect x="2092.0" y="601.0" width="5" height="14.0" fill="#1d6b59" stroke="#2a9273" stroke-width="0.8"/><rect x="2098.0" y="613.4" width="5" height="1.6" fill="#6d3340" stroke="#a2454f" stroke-width="0.8"/><rect x="2104.0" y="614.8" width="5" height="0.2" fill="#1d6b59" stroke="#2a9273" stroke-width="0.8"/><rect x="2110.0" y="612.8" width="5" height="2.2" fill="#6d3340" stroke="#a2454f" stroke-width="0.8"/><rect x="2116.0" y="610.3" width="5" height="4.7" fill="#6d3340" stroke="#a2454f" stroke-width="0.8"/><rect x="2122.0" y="608.8" width="5" height="6.2" fill="#1d6b59" stroke="#2a9273" stroke-width="0.8"/><rect x="2128.0" y="613.9" width="5" height="1.1" fill="#6d3340" stroke="#a2454f" stroke-width="0.8"/><rect x="2134.0" y="614.7" width="5" height="0.3" fill="#1d6b59" stroke="#2a9273" stroke-width="0.8"/><rect x="2140.0" y="608.8" width="5" height="6.2" fill="#6d3340" stroke="#a2454f" stroke-width="0.8"/><rect x="2146.0" y="614.5" width="5" height="0.5" fill="#6d3340" stroke="#a2454f" stroke-width="0.8"/><rect x="2152.0" y="588.5" width="5" height="26.5" fill="#6d3340" stroke="#a2454f" stroke-width="0.8"/><rect x="2158.0" y="613.1" width="5" height="1.9" fill="#1d6b59" stroke="#2a9273" stroke-width="0.8"/><rect x="2164.0" y="607.2" width="5" height="7.8" fill="#1d6b59" stroke="#2a9273" stroke-width="0.8"/><rect x="2170.0" y="607.2" width="5" height="7.8" fill="#1d6b59" stroke="#2a9273" stroke-width="0.8"/><rect x="2176.0" y="613.7" width="5" height="1.3" fill="#1d6b59" stroke="#2a9273" stroke-width="0.8"/><rect x="2182.0" y="608.8" width="5" height="6.2" fill="#6d3340" stroke="#a2454f" stroke-width="0.8"/><rect x="2188.0" y="571.4" width="5" height="43.6" fill="#1d6b59" stroke="#2a9273" stroke-width="0.8"/><rect x="2194.0" y="593.2" width="5" height="21.8" fill="#6d3340" stroke="#a2454f" stroke-width="0.8"/><rect x="2200.0" y="604.1" width="5" height="10.9" fill="#6d3340" stroke="#a2454f" stroke-width="0.8"/><rect x="2206.0" y="596.3" width="5" height="18.7" fill="#6d3340" stroke="#a2454f" stroke-width="0.8"/><rect x="2212.0" y="607.2" width="5" height="7.8" fill="#1d6b59" stroke="#2a9273" stroke-width="0.8"/><rect x="2218.0" y="612.8" width="5" height="2.2" fill="#1d6b59" stroke="#2a9273" stroke-width="0.8"/><rect x="2224.0" y="613.9" width="5" height="1.1" fill="#1d6b59" stroke="#2a9273" stroke-width="0.8"/><rect x="2230.0" y="608.8" width="5" height="6.2" fill="#6d3340" stroke="#a2454f" stroke-width="0.8"/><rect x="2236.0" y="607.2" width="5" height="7.8" fill="#1d6b59" stroke="#2a9273" stroke-width="0.8"/><rect x="2242.0" y="595.4" width="5" height="19.6" fill="#6d3340" stroke="#a2454f" stroke-width="0.8"/><rect x="2248.0" y="555.8" width="5" height="59.2" fill="#6d3340" stroke="#a2454f" stroke-width="0.8"/><rect x="2254.0" y="608.8" width="5" height="6.2" fill="#1d6b59" stroke="#2a9273" stroke-width="0.8"/><rect x="2260.0" y="540.2" width="5" height="74.8" fill="#1d6b59" stroke="#2a9273" stroke-width="0.8"/><rect x="2266.0" y="594.7" width="5" height="20.3" fill="#6d3340" stroke="#a2454f" stroke-width="0.8"/><rect x="2272.0" y="613.1" width="5" height="1.9" fill="#6d3340" stroke="#a2454f" stroke-width="0.8"/><rect x="2278.0" y="608.8" width="5" height="6.2" fill="#1d6b59" stroke="#2a9273" stroke-width="0.8"/><rect x="2284.0" y="601.0" width="5" height="14.0" fill="#1d6b59" stroke="#2a9273" stroke-width="0.8"/><rect x="2290.0" y="586.9" width="5" height="28.1" fill="#1d6b59" stroke="#2a9273" stroke-width="0.8"/><rect x="2296.0" y="568.2" width="5" height="46.8" fill="#1d6b59" stroke="#2a9273" stroke-width="0.8"/><rect x="2302.0" y="591.6" width="5" height="23.4" fill="#6d3340" stroke="#a2454f" stroke-width="0.8"/><rect x="2308.0" y="599.4" width="5" height="15.6" fill="#6d3340" stroke="#a2454f" stroke-width="0.8"/><rect x="2314.0" y="614.1" width="5" height="0.9" fill="#1d6b59" stroke="#2a9273" stroke-width="0.8"/><rect x="2320.0" y="611.9" width="5" height="3.1" fill="#1d6b59" stroke="#2a9273" stroke-width="0.8"/><rect x="2326.0" y="614.2" width="5" height="0.8" fill="#1d6b59" stroke="#2a9273" stroke-width="0.8"/><rect x="2332.0" y="583.8" width="5" height="31.2" fill="#1d6b59" stroke="#2a9273" stroke-width="0.8"/><rect x="2338.0" y="613.6" width="5" height="1.4" fill="#1d6b59" stroke="#2a9273" stroke-width="0.8"/><rect x="2344.0" y="611.9" width="5" height="3.1" fill="#1d6b59" stroke="#2a9273" stroke-width="0.8"/><rect x="2350.0" y="613.2" width="5" height="1.8" fill="#1d6b59" stroke="#2a9273" stroke-width="0.8"/><rect x="2356.0" y="606.3" width="5" height="8.7" fill="#6d3340" stroke="#a2454f" stroke-width="0.8"/><rect x="2362.0" y="614.2" width="5" height="0.8" fill="#6d3340" stroke="#a2454f" stroke-width="0.8"/><rect x="2368.0" y="607.8" width="5" height="7.2" fill="#6d3340" stroke="#a2454f" stroke-width="0.8"/><rect x="2374.0" y="612.9" width="5" height="2.1" fill="#1d6b59" stroke="#2a9273" stroke-width="0.8"/><rect x="2380.0" y="614.2" width="5" height="0.8" fill="#6d3340" stroke="#a2454f" stroke-width="0.8"/><rect x="2386.0" y="614.2" width="5" height="0.8" fill="#1d6b59" stroke="#2a9273" stroke-width="0.8"/><rect x="2392.0" y="611.9" width="5" height="3.1" fill="#1d6b59" stroke="#2a9273" stroke-width="0.8"/><rect x="2398.0" y="614.4" width="5" height="0.6" fill="#1d6b59" stroke="#2a9273" stroke-width="0.8"/><rect x="2404.0" y="614.3" width="5" height="0.7" fill="#6d3340" stroke="#a2454f" stroke-width="0.8"/><rect x="2410.0" y="613.1" width="5" height="1.9" fill="#1d6b59" stroke="#2a9273" stroke-width="0.8"/><rect x="2416.0" y="613.6" width="5" height="1.4" fill="#6d3340" stroke="#a2454f" stroke-width="0.8"/><rect x="2422.0" y="613.6" width="5" height="1.4" fill="#6d3340" stroke="#a2454f" stroke-width="0.8"/><rect x="2428.0" y="613.4" width="5" height="1.6" fill="#1d6b59" stroke="#2a9273" stroke-width="0.8"/><rect x="2434.0" y="614.6" width="5" height="0.4" fill="#6d3340" stroke="#a2454f" stroke-width="0.8"/><rect x="2440.0" y="614.1" width="5" height="0.9" fill="#6d3340" stroke="#a2454f" stroke-width="0.8"/><rect x="2446.0" y="608.8" width="5" height="6.2" fill="#6d3340" stroke="#a2454f" stroke-width="0.8"/><rect x="2452.0" y="612.8" width="5" height="2.2" fill="#6d3340" stroke="#a2454f" stroke-width="0.8"/><rect x="2458.0" y="614.1" width="5" height="0.9" fill="#6d3340" stroke="#a2454f" stroke-width="0.8"/><rect x="2464.0" y="613.7" width="5" height="1.3" fill="#1d6b59" stroke="#2a9273" stroke-width="0.8"/><rect x="2470.0" y="613.7" width="5" height="1.3" fill="#6d3340" stroke="#a2454f" stroke-width="0.8"/><rect x="2476.0" y="614.6" width="5" height="0.4" fill="#6d3340" stroke="#a2454f" stroke-width="0.8"/><rect x="2482.0" y="611.9" width="5" height="3.1" fill="#6d3340" stroke="#a2454f" stroke-width="0.8"/><rect x="2488.0" y="613.0" width="5" height="2.0" fill="#1d6b59" stroke="#2a9273" stroke-width="0.8"/><rect x="2494.0" y="613.0" width="5" height="2.0" fill="#1d6b59" stroke="#2a9273" stroke-width="0.8"/><rect x="2500.0" y="606.3" width="5" height="8.7" fill="#1d6b59" stroke="#2a9273" stroke-width="0.8"/><rect x="2506.0" y="614.4" width="5" height="0.6" fill="#1d6b59" stroke="#2a9273" stroke-width="0.8"/><rect x="2512.0" y="614.0" width="5" height="1.0" fill="#1d6b59" stroke="#2a9273" stroke-width="0.8"/><rect x="2518.0" y="613.7" width="5" height="1.3" fill="#1d6b59" stroke="#2a9273" stroke-width="0.8"/><rect x="2524.0" y="609.4" width="5" height="5.6" fill="#1d6b59" stroke="#2a9273" stroke-width="0.8"/><rect x="2530.0" y="613.2" width="5" height="1.8" fill="#6d3340" stroke="#a2454f" stroke-width="0.8"/><rect x="2536.0" y="607.8" width="5" height="7.2" fill="#6d3340" stroke="#a2454f" stroke-width="0.8"/><rect x="2542.0" y="610.3" width="5" height="4.7" fill="#6d3340" stroke="#a2454f" stroke-width="0.8"/><rect x="2548.0" y="613.2" width="5" height="1.8" fill="#1d6b59" stroke="#2a9273" stroke-width="0.8"/><rect x="2554.0" y="607.2" width="5" height="7.8" fill="#6d3340" stroke="#a2454f" stroke-width="0.8"/><rect x="2560.0" y="574.5" width="5" height="40.5" fill="#6d3340" stroke="#a2454f" stroke-width="0.8"/><rect x="2566.0" y="607.2" width="5" height="7.8" fill="#1d6b59" stroke="#2a9273" stroke-width="0.8"/><rect x="2572.0" y="614.2" width="5" height="0.8" fill="#6d3340" stroke="#a2454f" stroke-width="0.8"/><rect x="2578.0" y="614.1" width="5" height="0.9" fill="#6d3340" stroke="#a2454f" stroke-width="0.8"/><rect x="2584.0" y="611.9" width="5" height="3.1" fill="#1d6b59" stroke="#2a9273" stroke-width="0.8"/><rect x="2590.0" y="614.3" width="5" height="0.7" fill="#1d6b59" stroke="#2a9273" stroke-width="0.8"/><rect x="2596.0" y="613.1" width="5" height="1.9" fill="#6d3340" stroke="#a2454f" stroke-width="0.8"/><rect x="2602.0" y="613.4" width="5" height="1.6" fill="#6d3340" stroke="#a2454f" stroke-width="0.8"/><rect x="2608.0" y="614.2" width="5" height="0.8" fill="#6d3340" stroke="#a2454f" stroke-width="0.8"/><rect x="2614.0" y="613.4" width="5" height="1.6" fill="#6d3340" stroke="#a2454f" stroke-width="0.8"/><rect x="2620.0" y="613.5" width="5" height="1.5" fill="#6d3340" stroke="#a2454f" stroke-width="0.8"/><rect x="2626.0" y="604.1" width="5" height="10.9" fill="#6d3340" stroke="#a2454f" stroke-width="0.8"/><rect x="2632.0" y="605.6" width="5" height="9.4" fill="#1d6b59" stroke="#2a9273" stroke-width="0.8"/><rect x="2638.0" y="613.8" width="5" height="1.2" fill="#1d6b59" stroke="#2a9273" stroke-width="0.8"/><rect x="2644.0" y="613.0" width="5" height="2.0" fill="#1d6b59" stroke="#2a9273" stroke-width="0.8"/><rect x="2650.0" y="613.2" width="5" height="1.8" fill="#6d3340" stroke="#a2454f" stroke-width="0.8"/><rect x="2656.0" y="582.3" width="5" height="32.7" fill="#6d3340" stroke="#a2454f" stroke-width="0.8"/><rect x="2662.0" y="582.3" width="5" height="32.7" fill="#1d6b59" stroke="#2a9273" stroke-width="0.8"/><rect x="2668.0" y="611.9" width="5" height="3.1" fill="#1d6b59" stroke="#2a9273" stroke-width="0.8"/><rect x="2674.0" y="607.2" width="5" height="7.8" fill="#6d3340" stroke="#a2454f" stroke-width="0.8"/><rect x="2680.0" y="608.8" width="5" height="6.2" fill="#1d6b59" stroke="#2a9273" stroke-width="0.8"/><rect x="2686.0" y="610.3" width="5" height="4.7" fill="#6d3340" stroke="#a2454f" stroke-width="0.8"/><rect x="2692.0" y="580.7" width="5" height="34.3" fill="#6d3340" stroke="#a2454f" stroke-width="0.8"/><rect x="2698.0" y="529.3" width="5" height="85.7" fill="#1d6b59" stroke="#2a9273" stroke-width="0.8"/><rect x="2704.0" y="599.4" width="5" height="15.6" fill="#1d6b59" stroke="#2a9273" stroke-width="0.8"/><rect x="2710.0" y="613.7" width="5" height="1.3" fill="#1d6b59" stroke="#2a9273" stroke-width="0.8"/><rect x="2716.0" y="598.5" width="5" height="16.5" fill="#6d3340" stroke="#a2454f" stroke-width="0.8"/><rect x="2722.0" y="586.9" width="5" height="28.1" fill="#1d6b59" stroke="#2a9273" stroke-width="0.8"/><rect x="2728.0" y="614.3" width="5" height="0.7" fill="#1d6b59" stroke="#2a9273" stroke-width="0.8"/><rect x="2734.0" y="613.7" width="5" height="1.3" fill="#6d3340" stroke="#a2454f" stroke-width="0.8"/><rect x="2740.0" y="605.6" width="5" height="9.4" fill="#1d6b59" stroke="#2a9273" stroke-width="0.8"/><rect x="2746.0" y="612.9" width="5" height="2.1" fill="#1d6b59" stroke="#2a9273" stroke-width="0.8"/><rect x="2752.0" y="608.8" width="5" height="6.2" fill="#1d6b59" stroke="#2a9273" stroke-width="0.8"/><rect x="2758.0" y="606.3" width="5" height="8.7" fill="#1d6b59" stroke="#2a9273" stroke-width="0.8"/><rect x="2764.0" y="613.0" width="5" height="2.0" fill="#6d3340" stroke="#a2454f" stroke-width="0.8"/><rect x="2770.0" y="610.3" width="5" height="4.7" fill="#1d6b59" stroke="#2a9273" stroke-width="0.8"/><rect x="2776.0" y="605.6" width="5" height="9.4" fill="#6d3340" stroke="#a2454f" stroke-width="0.8"/><rect x="2782.0" y="614.1" width="5" height="0.9" fill="#1d6b59" stroke="#2a9273" stroke-width="0.8"/><rect x="2788.0" y="608.8" width="5" height="6.2" fill="#1d6b59" stroke="#2a9273" stroke-width="0.8"/><rect x="2794.0" y="612.9" width="5" height="2.1" fill="#6d3340" stroke="#a2454f" stroke-width="0.8"/><rect x="2800.0" y="613.4" width="5" height="1.6" fill="#6d3340" stroke="#a2454f" stroke-width="0.8"/><rect x="2806.0" y="608.8" width="5" height="6.2" fill="#6d3340" stroke="#a2454f" stroke-width="0.8"/><rect x="2812.0" y="613.0" width="5" height="2.0" fill="#1d6b59" stroke="#2a9273" stroke-width="0.8"/><rect x="2818.0" y="613.1" width="5" height="1.9" fill="#1d6b59" stroke="#2a9273" stroke-width="0.8"/><rect x="2824.0" y="614.2" width="5" height="0.8" fill="#1d6b59" stroke="#2a9273" stroke-width="0.8"/><rect x="2830.0" y="614.5" width="5" height="0.5" fill="#6d3340" stroke="#a2454f" stroke-width="0.8"/><rect x="2836.0" y="610.3" width="5" height="4.7" fill="#6d3340" stroke="#a2454f" stroke-width="0.8"/><rect x="2842.0" y="613.7" width="5" height="1.3" fill="#6d3340" stroke="#a2454f" stroke-width="0.8"/><rect x="2848.0" y="613.3" width="5" height="1.7" fill="#1d6b59" stroke="#2a9273" stroke-width="0.8"/><rect x="2854.0" y="613.6" width="5" height="1.4" fill="#1d6b59" stroke="#2a9273" stroke-width="0.8"/><rect x="2860.0" y="608.8" width="5" height="6.2" fill="#1d6b59" stroke="#2a9273" stroke-width="0.8"/><rect x="2866.0" y="606.3" width="5" height="8.7" fill="#6d3340" stroke="#a2454f" stroke-width="0.8"/><rect x="2872.0" y="614.7" width="5" height="0.3" fill="#1d6b59" stroke="#2a9273" stroke-width="0.8"/><rect x="2878.0" y="606.3" width="5" height="8.7" fill="#1d6b59" stroke="#2a9273" stroke-width="0.8"/><rect x="2884.0" y="601.0" width="5" height="14.0" fill="#1d6b59" stroke="#2a9273" stroke-width="0.8"/><rect x="2890.0" y="512.1" width="5" height="102.9" fill="#1d6b59" stroke="#2a9273" stroke-width="0.8"/><rect x="2896.0" y="610.3" width="5" height="4.7" fill="#6d3340" stroke="#a2454f" stroke-width="0.8"/><rect x="2902.0" y="603.2" width="5" height="11.8" fill="#6d3340" stroke="#a2454f" stroke-width="0.8"/><rect x="2908.0" y="604.1" width="5" height="10.9" fill="#6d3340" stroke="#a2454f" stroke-width="0.8"/><rect x="2914.0" y="590.1" width="5" height="24.9" fill="#1d6b59" stroke="#2a9273" stroke-width="0.8"/><rect x="2920.0" y="613.4" width="5" height="1.6" fill="#6d3340" stroke="#a2454f" stroke-width="0.8"/><rect x="2926.0" y="614.4" width="5" height="0.6" fill="#1d6b59" stroke="#2a9273" stroke-width="0.8"/><rect x="2932.0" y="614.7" width="5" height="0.3" fill="#1d6b59" stroke="#2a9273" stroke-width="0.8"/></g><g stroke-width="1"><path d="M408.5 214.9V215.7" stroke="#53b987"/><rect x="406.0" y="214.9" width="5" height="1.0" fill="#53b987"/><path d="M414.5 214.9V215.7" stroke="#eb4d5c"/><rect x="412.0" y="214.9" width="5" height="1.0" fill="#eb4d5c"/><path d="M420.5 211.6V225.0" stroke="#eb4d5c"/><rect x="418.0" y="215.1" width="5" height="9.9" fill="#eb4d5c"/><path d="M426.5 223.9V230.5" stroke="#eb4d5c"/><rect x="424.0" y="223.9" width="5" height="5.0" fill="#eb4d5c"/><path d="M432.5 226.2V228.5" stroke="#53b987"/><rect x="430.0" y="226.2" width="5" height="2.3" fill="#53b987"/><path d="M438.5 222.1V226.8" stroke="#53b987"/><rect x="436.0" y="222.1" width="5" height="4.7" fill="#53b987"/><path d="M444.5 221.9V222.7" stroke="#53b987"/><rect x="442.0" y="221.9" width="5" height="1.0" fill="#53b987"/><path d="M450.5 221.0V222.7" stroke="#53b987"/><rect x="448.0" y="221.0" width="5" height="1.7" fill="#53b987"/><path d="M456.5 218.1V221.8" stroke="#53b987"/><rect x="454.0" y="218.1" width="5" height="3.7" fill="#53b987"/><path d="M462.5 208.7V215.1" stroke="#53b987"/><rect x="460.0" y="208.7" width="5" height="6.4" fill="#53b987"/><path d="M468.5 208.4V211.6" stroke="#eb4d5c"/><rect x="466.0" y="208.4" width="5" height="3.3" fill="#eb4d5c"/><path d="M474.5 208.7V214.0" stroke="#eb4d5c"/><rect x="472.0" y="208.7" width="5" height="5.2" fill="#eb4d5c"/><path d="M480.5 215.1V221.0" stroke="#eb4d5c"/><rect x="478.0" y="215.1" width="5" height="5.8" fill="#eb4d5c"/><path d="M486.5 219.8V221.0" stroke="#53b987"/><rect x="484.0" y="219.8" width="5" height="1.2" fill="#53b987"/><path d="M492.5 218.1V221.5" stroke="#53b987"/><rect x="490.0" y="218.1" width="5" height="3.5" fill="#53b987"/><path d="M498.5 217.5V218.9" stroke="#53b987"/><rect x="496.0" y="217.5" width="5" height="1.4" fill="#53b987"/><path d="M504.5 215.1V225.0" stroke="#eb4d5c"/><rect x="502.0" y="215.1" width="5" height="9.9" fill="#eb4d5c"/><path d="M510.5 219.8V225.0" stroke="#53b987"/><rect x="508.0" y="219.8" width="5" height="5.2" fill="#53b987"/><path d="M516.5 219.2V220.4" stroke="#53b987"/><rect x="514.0" y="219.2" width="5" height="1.2" fill="#53b987"/><path d="M522.5 219.2V220.7" stroke="#eb4d5c"/><rect x="520.0" y="219.2" width="5" height="1.5" fill="#eb4d5c"/><path d="M528.5 219.8V220.7" stroke="#53b987"/><rect x="526.0" y="219.8" width="5" height="1.0" fill="#53b987"/><path d="M534.5 219.2V225.0" stroke="#eb4d5c"/><rect x="532.0" y="219.2" width="5" height="5.8" fill="#eb4d5c"/><path d="M540.5 224.1V225.0" stroke="#eb4d5c"/><rect x="538.0" y="224.1" width="5" height="1.0" fill="#eb4d5c"/><path d="M546.5 223.9V229.1" stroke="#eb4d5c"/><rect x="544.0" y="223.9" width="5" height="5.2" fill="#eb4d5c"/><path d="M552.5 223.9V228.4" stroke="#53b987"/><rect x="550.0" y="227.5" width="5" height="1.0" fill="#53b987"/><path d="M558.5 226.8V228.9" stroke="#53b987"/><rect x="556.0" y="226.8" width="5" height="2.1" fill="#53b987"/><path d="M564.5 226.9V227.8" stroke="#eb4d5c"/><rect x="562.0" y="226.9" width="5" height="1.0" fill="#eb4d5c"/><path d="M570.5 226.9V227.8" stroke="#53b987"/><rect x="568.0" y="226.9" width="5" height="1.0" fill="#53b987"/><path d="M576.5 226.2V227.9" stroke="#eb4d5c"/><rect x="574.0" y="226.2" width="5" height="1.7" fill="#eb4d5c"/><path d="M582.5 226.9V227.8" stroke="#53b987"/><rect x="580.0" y="226.9" width="5" height="1.0" fill="#53b987"/><path d="M588.5 226.9V227.8" stroke="#eb4d5c"/><rect x="586.0" y="226.9" width="5" height="1.0" fill="#eb4d5c"/><path d="M594.5 227.0V237.8" stroke="#eb4d5c"/><rect x="592.0" y="227.0" width="5" height="10.8" fill="#eb4d5c"/><path d="M600.5 237.0V238.0" stroke="#eb4d5c"/><rect x="598.0" y="237.0" width="5" height="1.0" fill="#eb4d5c"/><path d="M606.5 229.1V236.8" stroke="#eb4d5c"/><rect x="604.0" y="235.9" width="5" height="1.0" fill="#eb4d5c"/><path d="M612.5 231.2V237.0" stroke="#53b987"/><rect x="610.0" y="231.2" width="5" height="5.8" fill="#53b987"/><path d="M618.5 227.0V231.7" stroke="#53b987"/><rect x="616.0" y="227.0" width="5" height="4.7" fill="#53b987"/><path d="M624.5 226.6V227.5" stroke="#53b987"/><rect x="622.0" y="226.6" width="5" height="1.0" fill="#53b987"/><path d="M630.5 224.2V227.9" stroke="#53b987"/><rect x="628.0" y="224.2" width="5" height="3.7" fill="#53b987"/><path d="M636.5 220.0V224.5" stroke="#53b987"/><rect x="634.0" y="220.0" width="5" height="4.4" fill="#53b987"/><path d="M642.5 219.9V220.8" stroke="#eb4d5c"/><rect x="640.0" y="219.9" width="5" height="1.0" fill="#eb4d5c"/><path d="M648.5 221.1V222.0" stroke="#53b987"/><rect x="646.0" y="221.1" width="5" height="1.0" fill="#53b987"/><path d="M654.5 215.1V221.5" stroke="#53b987"/><rect x="652.0" y="215.1" width="5" height="6.4" fill="#53b987"/><path d="M660.5 214.6V219.2" stroke="#eb4d5c"/><rect x="658.0" y="214.6" width="5" height="4.7" fill="#eb4d5c"/><path d="M666.5 218.1V224.5" stroke="#eb4d5c"/><rect x="664.0" y="218.1" width="5" height="6.4" fill="#eb4d5c"/><path d="M672.5 223.9V245.7" stroke="#eb4d5c"/><rect x="670.0" y="223.9" width="5" height="21.8" fill="#eb4d5c"/><path d="M678.5 243.8V244.7" stroke="#53b987"/><rect x="676.0" y="243.8" width="5" height="1.0" fill="#53b987"/><path d="M684.5 244.4V245.3" stroke="#eb4d5c"/><rect x="682.0" y="244.4" width="5" height="1.0" fill="#eb4d5c"/><path d="M690.5 244.8V251.8" stroke="#eb4d5c"/><rect x="688.0" y="244.8" width="5" height="7.0" fill="#eb4d5c"/><path d="M696.5 249.8V251.2" stroke="#53b987"/><rect x="694.0" y="249.8" width="5" height="1.4" fill="#53b987"/><path d="M702.5 249.5V254.7" stroke="#eb4d5c"/><rect x="700.0" y="249.5" width="5" height="5.2" fill="#eb4d5c"/><path d="M708.5 259.4V262.1" stroke="#53b987"/><rect x="706.0" y="259.4" width="5" height="2.7" fill="#53b987"/><path d="M714.5 259.4V261.3" stroke="#eb4d5c"/><rect x="712.0" y="259.4" width="5" height="1.9" fill="#eb4d5c"/><path d="M720.5 260.4V261.8" stroke="#53b987"/><rect x="718.0" y="260.4" width="5" height="1.0" fill="#53b987"/><path d="M726.5 258.8V260.4" stroke="#53b987"/><rect x="724.0" y="259.3" width="5" height="1.1" fill="#53b987"/><path d="M732.5 259.3V265.2" stroke="#eb4d5c"/><rect x="730.0" y="259.3" width="5" height="5.9" fill="#eb4d5c"/><path d="M738.5 264.4V266.2" stroke="#eb4d5c"/><rect x="736.0" y="264.4" width="5" height="1.2" fill="#eb4d5c"/><path d="M744.5 265.6V302.1" stroke="#eb4d5c"/><rect x="742.0" y="265.6" width="5" height="36.6" fill="#eb4d5c"/><path d="M750.5 300.7V315.2" stroke="#eb4d5c"/><rect x="748.0" y="300.7" width="5" height="14.6" fill="#eb4d5c"/><path d="M756.5 315.8V323.9" stroke="#eb4d5c"/><rect x="754.0" y="315.8" width="5" height="6.2" fill="#eb4d5c"/><path d="M762.5 322.0V330.8" stroke="#eb4d5c"/><rect x="760.0" y="322.0" width="5" height="5.6" fill="#eb4d5c"/><path d="M768.5 313.3V327.4" stroke="#53b987"/><rect x="766.0" y="313.3" width="5" height="14.0" fill="#53b987"/><path d="M774.5 313.3V314.8" stroke="#eb4d5c"/><rect x="772.0" y="313.3" width="5" height="1.0" fill="#eb4d5c"/><path d="M780.5 306.4V323.8" stroke="#53b987"/><rect x="778.0" y="306.4" width="5" height="7.1" fill="#53b987"/><path d="M786.5 303.6V306.4" stroke="#53b987"/><rect x="784.0" y="303.6" width="5" height="2.9" fill="#53b987"/><path d="M792.5 303.5V303.6" stroke="#53b987"/><rect x="790.0" y="303.5" width="5" height="1.0" fill="#53b987"/><path d="M798.5 303.5V303.8" stroke="#eb4d5c"/><rect x="796.0" y="303.5" width="5" height="1.0" fill="#eb4d5c"/><path d="M804.5 303.8V304.0" stroke="#eb4d5c"/><rect x="802.0" y="303.8" width="5" height="1.0" fill="#eb4d5c"/><path d="M810.5 298.6V304.0" stroke="#53b987"/><rect x="808.0" y="299.5" width="5" height="4.6" fill="#53b987"/><path d="M816.5 281.8V299.0" stroke="#53b987"/><rect x="814.0" y="281.8" width="5" height="17.2" fill="#53b987"/><path d="M822.5 281.8V283.1" stroke="#eb4d5c"/><rect x="820.0" y="281.8" width="5" height="1.3" fill="#eb4d5c"/><path d="M828.5 283.1V306.6" stroke="#eb4d5c"/><rect x="826.0" y="283.1" width="5" height="3.3" fill="#eb4d5c"/><path d="M834.5 286.4V287.4" stroke="#eb4d5c"/><rect x="832.0" y="286.4" width="5" height="1.0" fill="#eb4d5c"/><path d="M840.5 287.4V292.2" stroke="#eb4d5c"/><rect x="838.0" y="287.4" width="5" height="1.9" fill="#eb4d5c"/><path d="M846.5 288.8V290.0" stroke="#53b987"/><rect x="844.0" y="288.8" width="5" height="1.0" fill="#53b987"/><path d="M852.5 287.0V290.4" stroke="#eb4d5c"/><rect x="850.0" y="288.8" width="5" height="1.5" fill="#eb4d5c"/><path d="M858.5 285.7V290.4" stroke="#53b987"/><rect x="856.0" y="285.7" width="5" height="4.7" fill="#53b987"/><path d="M864.5 260.9V286.5" stroke="#53b987"/><rect x="862.0" y="260.9" width="5" height="25.6" fill="#53b987"/><path d="M870.5 254.8V262.1" stroke="#53b987"/><rect x="868.0" y="254.8" width="5" height="7.3" fill="#53b987"/><path d="M876.5 253.3V255.5" stroke="#eb4d5c"/><rect x="874.0" y="254.8" width="5" height="1.0" fill="#eb4d5c"/><path d="M882.5 254.0V255.5" stroke="#53b987"/><rect x="880.0" y="254.0" width="5" height="1.5" fill="#53b987"/><path d="M888.5 248.2V255.3" stroke="#53b987"/><rect x="886.0" y="248.9" width="5" height="6.4" fill="#53b987"/><path d="M894.5 247.3V250.9" stroke="#53b987"/><rect x="892.0" y="247.3" width="5" height="1.6" fill="#53b987"/><path d="M900.5 247.3V252.1" stroke="#eb4d5c"/><rect x="898.0" y="247.3" width="5" height="4.9" fill="#eb4d5c"/><path d="M906.5 252.1V260.3" stroke="#eb4d5c"/><rect x="904.0" y="252.1" width="5" height="6.8" fill="#eb4d5c"/><path d="M912.5 257.9V260.3" stroke="#eb4d5c"/><rect x="910.0" y="257.9" width="5" height="2.4" fill="#eb4d5c"/><path d="M918.5 259.2V261.7" stroke="#53b987"/><rect x="916.0" y="259.2" width="5" height="1.1" fill="#53b987"/><path d="M924.5 258.3V259.2" stroke="#53b987"/><rect x="922.0" y="258.3" width="5" height="1.0" fill="#53b987"/><path d="M930.5 252.8V259.9" stroke="#53b987"/><rect x="928.0" y="252.8" width="5" height="5.5" fill="#53b987"/><path d="M936.5 252.2V258.3" stroke="#eb4d5c"/><rect x="934.0" y="252.2" width="5" height="6.0" fill="#eb4d5c"/><path d="M942.5 258.3V259.2" stroke="#eb4d5c"/><rect x="940.0" y="258.3" width="5" height="1.0" fill="#eb4d5c"/><path d="M948.5 257.9V261.6" stroke="#eb4d5c"/><rect x="946.0" y="257.9" width="5" height="3.6" fill="#eb4d5c"/><path d="M954.5 256.6V264.3" stroke="#53b987"/><rect x="952.0" y="258.0" width="5" height="3.7" fill="#53b987"/><path d="M960.5 257.3V262.9" stroke="#eb4d5c"/><rect x="958.0" y="259.2" width="5" height="3.7" fill="#eb4d5c"/><path d="M966.5 262.9V267.6" stroke="#eb4d5c"/><rect x="964.0" y="262.9" width="5" height="4.7" fill="#eb4d5c"/><path d="M972.5 261.2V267.6" stroke="#53b987"/><rect x="970.0" y="263.3" width="5" height="4.4" fill="#53b987"/><path d="M978.5 263.3V268.0" stroke="#eb4d5c"/><rect x="976.0" y="263.3" width="5" height="4.3" fill="#eb4d5c"/><path d="M984.5 264.9V267.6" stroke="#53b987"/><rect x="982.0" y="264.9" width="5" height="2.6" fill="#53b987"/><path d="M990.5 257.4V264.9" stroke="#53b987"/><rect x="988.0" y="260.5" width="5" height="4.4" fill="#53b987"/><path d="M996.5 261.7V268.7" stroke="#eb4d5c"/><rect x="994.0" y="261.7" width="5" height="6.0" fill="#eb4d5c"/><path d="M1002.5 267.3V267.7" stroke="#53b987"/><rect x="1000.0" y="267.3" width="5" height="1.0" fill="#53b987"/><path d="M1008.5 266.9V269.8" stroke="#eb4d5c"/><rect x="1006.0" y="267.3" width="5" height="1.0" fill="#eb4d5c"/><path d="M1014.5 267.5V270.9" stroke="#eb4d5c"/><rect x="1012.0" y="268.5" width="5" height="2.4" fill="#eb4d5c"/><path d="M1020.5 270.9V273.7" stroke="#eb4d5c"/><rect x="1018.0" y="270.9" width="5" height="2.8" fill="#eb4d5c"/><path d="M1026.5 272.2V275.5" stroke="#eb4d5c"/><rect x="1024.0" y="273.7" width="5" height="1.8" fill="#eb4d5c"/><path d="M1032.5 271.1V275.5" stroke="#53b987"/><rect x="1030.0" y="272.7" width="5" height="2.8" fill="#53b987"/><path d="M1038.5 264.5V272.3" stroke="#53b987"/><rect x="1036.0" y="264.5" width="5" height="7.8" fill="#53b987"/><path d="M1044.5 264.5V266.4" stroke="#eb4d5c"/><rect x="1042.0" y="264.5" width="5" height="1.9" fill="#eb4d5c"/><path d="M1050.5 266.4V275.7" stroke="#eb4d5c"/><rect x="1048.0" y="266.4" width="5" height="8.7" fill="#eb4d5c"/><path d="M1056.5 274.0V283.4" stroke="#eb4d5c"/><rect x="1054.0" y="274.0" width="5" height="8.3" fill="#eb4d5c"/><path d="M1062.5 276.9V283.0" stroke="#53b987"/><rect x="1060.0" y="279.8" width="5" height="3.1" fill="#53b987"/><path d="M1068.5 279.2V283.7" stroke="#eb4d5c"/><rect x="1066.0" y="281.2" width="5" height="2.4" fill="#eb4d5c"/><path d="M1074.5 282.2V285.2" stroke="#eb4d5c"/><rect x="1072.0" y="282.2" width="5" height="3.0" fill="#eb4d5c"/><path d="M1080.5 281.3V286.5" stroke="#53b987"/><rect x="1078.0" y="281.3" width="5" height="5.1" fill="#53b987"/><path d="M1086.5 280.3V281.9" stroke="#eb4d5c"/><rect x="1084.0" y="281.3" width="5" height="1.0" fill="#eb4d5c"/><path d="M1092.5 279.9V289.0" stroke="#eb4d5c"/><rect x="1090.0" y="281.9" width="5" height="7.1" fill="#eb4d5c"/><path d="M1098.5 288.7V289.0" stroke="#53b987"/><rect x="1096.0" y="288.7" width="5" height="1.0" fill="#53b987"/><path d="M1104.5 277.5V290.0" stroke="#53b987"/><rect x="1102.0" y="278.9" width="5" height="11.2" fill="#53b987"/><path d="M1110.5 272.1V280.7" stroke="#53b987"/><rect x="1108.0" y="274.8" width="5" height="4.1" fill="#53b987"/><path d="M1116.5 266.5V274.8" stroke="#53b987"/><rect x="1114.0" y="268.6" width="5" height="6.2" fill="#53b987"/><path d="M1122.5 268.6V272.5" stroke="#eb4d5c"/><rect x="1120.0" y="268.6" width="5" height="4.0" fill="#eb4d5c"/><path d="M1128.5 265.2V272.5" stroke="#53b987"/><rect x="1126.0" y="265.5" width="5" height="7.1" fill="#53b987"/><path d="M1134.5 265.3V265.8" stroke="#eb4d5c"/><rect x="1132.0" y="265.5" width="5" height="1.0" fill="#eb4d5c"/><path d="M1140.5 265.9V270.0" stroke="#eb4d5c"/><rect x="1138.0" y="265.9" width="5" height="4.1" fill="#eb4d5c"/><path d="M1146.5 269.6V270.7" stroke="#eb4d5c"/><rect x="1144.0" y="270.0" width="5" height="1.0" fill="#eb4d5c"/><path d="M1152.5 266.1V270.7" stroke="#53b987"/><rect x="1150.0" y="266.1" width="5" height="4.6" fill="#53b987"/><path d="M1158.5 258.5V266.1" stroke="#53b987"/><rect x="1156.0" y="258.5" width="5" height="7.6" fill="#53b987"/><path d="M1164.5 245.3V258.5" stroke="#53b987"/><rect x="1162.0" y="245.3" width="5" height="13.2" fill="#53b987"/><path d="M1170.5 235.8V245.3" stroke="#53b987"/><rect x="1168.0" y="235.8" width="5" height="9.5" fill="#53b987"/><path d="M1176.5 235.8V236.8" stroke="#eb4d5c"/><rect x="1174.0" y="235.8" width="5" height="1.0" fill="#eb4d5c"/><path d="M1182.5 235.5V236.7" stroke="#53b987"/><rect x="1180.0" y="235.5" width="5" height="1.2" fill="#53b987"/><path d="M1188.5 235.5V237.2" stroke="#eb4d5c"/><rect x="1186.0" y="235.5" width="5" height="1.7" fill="#eb4d5c"/><path d="M1194.5 236.9V240.4" stroke="#eb4d5c"/><rect x="1192.0" y="237.2" width="5" height="1.0" fill="#eb4d5c"/><path d="M1200.5 236.0V237.9" stroke="#53b987"/><rect x="1198.0" y="236.0" width="5" height="1.9" fill="#53b987"/><path d="M1206.5 236.0V237.3" stroke="#eb4d5c"/><rect x="1204.0" y="236.0" width="5" height="1.3" fill="#eb4d5c"/><path d="M1212.5 234.4V238.2" stroke="#eb4d5c"/><rect x="1210.0" y="237.3" width="5" height="1.0" fill="#eb4d5c"/><path d="M1218.5 233.1V246.0" stroke="#eb4d5c"/><rect x="1216.0" y="238.2" width="5" height="6.2" fill="#eb4d5c"/><path d="M1224.5 240.7V244.4" stroke="#53b987"/><rect x="1222.0" y="240.7" width="5" height="3.7" fill="#53b987"/><path d="M1230.5 237.5V240.7" stroke="#53b987"/><rect x="1228.0" y="237.5" width="5" height="3.2" fill="#53b987"/><path d="M1236.5 237.2V237.5" stroke="#53b987"/><rect x="1234.0" y="237.2" width="5" height="1.0" fill="#53b987"/><path d="M1242.5 237.8V238.9" stroke="#eb4d5c"/><rect x="1240.0" y="237.8" width="5" height="1.0" fill="#eb4d5c"/><path d="M1248.5 238.3V244.7" stroke="#eb4d5c"/><rect x="1246.0" y="238.3" width="5" height="4.3" fill="#eb4d5c"/><path d="M1254.5 240.9V242.5" stroke="#53b987"/><rect x="1252.0" y="240.9" width="5" height="1.6" fill="#53b987"/><path d="M1260.5 240.9V243.7" stroke="#eb4d5c"/><rect x="1258.0" y="240.9" width="5" height="2.0" fill="#eb4d5c"/><path d="M1266.5 239.1V247.3" stroke="#eb4d5c"/><rect x="1264.0" y="242.9" width="5" height="4.3" fill="#eb4d5c"/><path d="M1272.5 238.8V247.3" stroke="#53b987"/><rect x="1270.0" y="238.8" width="5" height="8.5" fill="#53b987"/><path d="M1278.5 238.8V242.6" stroke="#eb4d5c"/><rect x="1276.0" y="238.8" width="5" height="3.8" fill="#eb4d5c"/><path d="M1284.5 242.6V247.8" stroke="#eb4d5c"/><rect x="1282.0" y="242.6" width="5" height="5.3" fill="#eb4d5c"/><path d="M1290.5 246.7V250.6" stroke="#eb4d5c"/><rect x="1288.0" y="246.7" width="5" height="3.9" fill="#eb4d5c"/><path d="M1296.5 247.0V250.6" stroke="#53b987"/><rect x="1294.0" y="247.0" width="5" height="3.6" fill="#53b987"/><path d="M1302.5 247.0V249.3" stroke="#eb4d5c"/><rect x="1300.0" y="247.0" width="5" height="1.0" fill="#eb4d5c"/><path d="M1308.5 238.6V248.9" stroke="#53b987"/><rect x="1306.0" y="238.6" width="5" height="9.1" fill="#53b987"/><path d="M1314.5 238.6V243.9" stroke="#eb4d5c"/><rect x="1312.0" y="238.6" width="5" height="5.2" fill="#eb4d5c"/><path d="M1320.5 243.9V246.4" stroke="#eb4d5c"/><rect x="1318.0" y="243.9" width="5" height="2.6" fill="#eb4d5c"/><path d="M1326.5 246.1V255.5" stroke="#eb4d5c"/><rect x="1324.0" y="246.4" width="5" height="9.1" fill="#eb4d5c"/><path d="M1332.5 251.8V256.7" stroke="#53b987"/><rect x="1330.0" y="251.8" width="5" height="2.7" fill="#53b987"/><path d="M1338.5 249.5V251.8" stroke="#53b987"/><rect x="1336.0" y="249.5" width="5" height="2.3" fill="#53b987"/><path d="M1344.5 249.5V250.0" stroke="#eb4d5c"/><rect x="1342.0" y="249.5" width="5" height="1.0" fill="#eb4d5c"/><path d="M1350.5 247.2V251.3" stroke="#53b987"/><rect x="1348.0" y="249.3" width="5" height="1.0" fill="#53b987"/><path d="M1356.5 248.3V251.1" stroke="#eb4d5c"/><rect x="1354.0" y="248.3" width="5" height="1.0" fill="#eb4d5c"/><path d="M1362.5 242.1V247.4" stroke="#53b987"/><rect x="1360.0" y="242.1" width="5" height="5.3" fill="#53b987"/><path d="M1368.5 242.1V249.0" stroke="#eb4d5c"/><rect x="1366.0" y="242.1" width="5" height="4.0" fill="#eb4d5c"/><path d="M1374.5 246.1V252.4" stroke="#eb4d5c"/><rect x="1372.0" y="246.1" width="5" height="5.4" fill="#eb4d5c"/><path d="M1380.5 246.7V251.5" stroke="#53b987"/><rect x="1378.0" y="249.7" width="5" height="1.8" fill="#53b987"/><path d="M1386.5 246.8V257.1" stroke="#eb4d5c"/><rect x="1384.0" y="248.4" width="5" height="3.8" fill="#eb4d5c"/><path d="M1392.5 248.3V253.8" stroke="#eb4d5c"/><rect x="1390.0" y="252.3" width="5" height="1.5" fill="#eb4d5c"/><path d="M1398.5 253.8V253.9" stroke="#eb4d5c"/><rect x="1396.0" y="253.8" width="5" height="1.0" fill="#eb4d5c"/><path d="M1404.5 253.9V257.0" stroke="#eb4d5c"/><rect x="1402.0" y="253.9" width="5" height="3.0" fill="#eb4d5c"/><path d="M1410.5 255.0V257.9" stroke="#53b987"/><rect x="1408.0" y="255.0" width="5" height="2.9" fill="#53b987"/><path d="M1416.5 253.8V265.2" stroke="#eb4d5c"/><rect x="1414.0" y="253.8" width="5" height="11.4" fill="#eb4d5c"/><path d="M1422.5 264.3V267.5" stroke="#eb4d5c"/><rect x="1420.0" y="264.3" width="5" height="3.2" fill="#eb4d5c"/><path d="M1428.5 251.6V267.5" stroke="#53b987"/><rect x="1426.0" y="251.6" width="5" height="15.9" fill="#53b987"/><path d="M1434.5 237.7V252.3" stroke="#53b987"/><rect x="1432.0" y="240.2" width="5" height="12.1" fill="#53b987"/><path d="M1440.5 226.9V240.7" stroke="#53b987"/><rect x="1438.0" y="226.9" width="5" height="11.9" fill="#53b987"/><path d="M1446.5 226.1V232.0" stroke="#eb4d5c"/><rect x="1444.0" y="226.1" width="5" height="5.9" fill="#eb4d5c"/><path d="M1452.5 226.2V232.0" stroke="#53b987"/><rect x="1450.0" y="226.2" width="5" height="5.9" fill="#53b987"/><path d="M1458.5 224.2V231.3" stroke="#eb4d5c"/><rect x="1456.0" y="226.2" width="5" height="3.7" fill="#eb4d5c"/><path d="M1464.5 223.5V229.8" stroke="#53b987"/><rect x="1462.0" y="223.5" width="5" height="6.4" fill="#53b987"/><path d="M1470.5 223.5V225.9" stroke="#eb4d5c"/><rect x="1468.0" y="223.5" width="5" height="2.3" fill="#eb4d5c"/><path d="M1476.5 225.7V230.0" stroke="#eb4d5c"/><rect x="1474.0" y="225.7" width="5" height="3.4" fill="#eb4d5c"/><path d="M1482.5 229.0V229.2" stroke="#53b987"/><rect x="1480.0" y="229.0" width="5" height="1.0" fill="#53b987"/><path d="M1488.5 229.0V231.9" stroke="#eb4d5c"/><rect x="1486.0" y="229.0" width="5" height="2.9" fill="#eb4d5c"/><path d="M1494.5 228.0V231.9" stroke="#53b987"/><rect x="1492.0" y="230.0" width="5" height="1.9" fill="#53b987"/><path d="M1500.5 226.9V230.0" stroke="#53b987"/><rect x="1498.0" y="226.9" width="5" height="3.1" fill="#53b987"/><path d="M1506.5 224.9V226.9" stroke="#53b987"/><rect x="1504.0" y="226.0" width="5" height="1.0" fill="#53b987"/><path d="M1512.5 224.3V232.0" stroke="#eb4d5c"/><rect x="1510.0" y="224.8" width="5" height="4.5" fill="#eb4d5c"/><path d="M1518.5 226.2V230.7" stroke="#53b987"/><rect x="1516.0" y="228.0" width="5" height="2.7" fill="#53b987"/><path d="M1524.5 222.6V228.9" stroke="#53b987"/><rect x="1522.0" y="224.5" width="5" height="4.4" fill="#53b987"/><path d="M1530.5 222.7V230.5" stroke="#eb4d5c"/><rect x="1528.0" y="224.5" width="5" height="6.1" fill="#eb4d5c"/><path d="M1536.5 221.5V231.8" stroke="#53b987"/><rect x="1534.0" y="221.5" width="5" height="9.0" fill="#53b987"/><path d="M1542.5 221.5V225.7" stroke="#eb4d5c"/><rect x="1540.0" y="221.5" width="5" height="4.2" fill="#eb4d5c"/><path d="M1548.5 222.7V225.7" stroke="#53b987"/><rect x="1546.0" y="222.7" width="5" height="3.0" fill="#53b987"/><path d="M1554.5 220.8V224.4" stroke="#eb4d5c"/><rect x="1552.0" y="222.7" width="5" height="1.7" fill="#eb4d5c"/><path d="M1560.5 225.5V226.5" stroke="#eb4d5c"/><rect x="1558.0" y="225.5" width="5" height="1.0" fill="#eb4d5c"/><path d="M1566.5 226.2V226.5" stroke="#53b987"/><rect x="1564.0" y="226.2" width="5" height="1.0" fill="#53b987"/><path d="M1572.5 226.2V235.9" stroke="#eb4d5c"/><rect x="1570.0" y="226.2" width="5" height="9.7" fill="#eb4d5c"/><path d="M1578.5 235.9V246.9" stroke="#eb4d5c"/><rect x="1576.0" y="235.9" width="5" height="10.6" fill="#eb4d5c"/><path d="M1584.5 246.5V273.3" stroke="#eb4d5c"/><rect x="1582.0" y="246.5" width="5" height="11.6" fill="#eb4d5c"/><path d="M1590.5 258.1V265.3" stroke="#eb4d5c"/><rect x="1588.0" y="258.1" width="5" height="4.7" fill="#eb4d5c"/><path d="M1596.5 257.7V261.8" stroke="#53b987"/><rect x="1594.0" y="257.7" width="5" height="4.2" fill="#53b987"/><path d="M1602.5 256.9V257.7" stroke="#53b987"/><rect x="1600.0" y="257.1" width="5" height="1.0" fill="#53b987"/><path d="M1608.5 255.8V258.3" stroke="#53b987"/><rect x="1606.0" y="255.8" width="5" height="1.3" fill="#53b987"/><path d="M1614.5 255.0V263.1" stroke="#eb4d5c"/><rect x="1612.0" y="255.0" width="5" height="6.8" fill="#eb4d5c"/><path d="M1620.5 260.4V261.7" stroke="#53b987"/><rect x="1618.0" y="260.4" width="5" height="1.3" fill="#53b987"/><path d="M1626.5 260.4V261.9" stroke="#eb4d5c"/><rect x="1624.0" y="260.4" width="5" height="1.4" fill="#eb4d5c"/><path d="M1632.5 255.6V261.9" stroke="#53b987"/><rect x="1630.0" y="256.3" width="5" height="5.5" fill="#53b987"/><path d="M1638.5 255.3V258.2" stroke="#eb4d5c"/><rect x="1636.0" y="256.3" width="5" height="1.8" fill="#eb4d5c"/><path d="M1644.5 256.1V258.2" stroke="#53b987"/><rect x="1642.0" y="256.1" width="5" height="2.0" fill="#53b987"/><path d="M1650.5 256.1V260.9" stroke="#eb4d5c"/><rect x="1648.0" y="256.1" width="5" height="4.8" fill="#eb4d5c"/><path d="M1656.5 260.9V263.3" stroke="#eb4d5c"/><rect x="1654.0" y="260.9" width="5" height="2.4" fill="#eb4d5c"/><path d="M1662.5 258.5V263.3" stroke="#53b987"/><rect x="1660.0" y="258.5" width="5" height="4.9" fill="#53b987"/><path d="M1668.5 258.5V264.5" stroke="#eb4d5c"/><rect x="1666.0" y="258.5" width="5" height="6.0" fill="#eb4d5c"/><path d="M1674.5 263.4V264.5" stroke="#53b987"/><rect x="1672.0" y="263.4" width="5" height="1.1" fill="#53b987"/><path d="M1680.5 261.0V262.9" stroke="#53b987"/><rect x="1678.0" y="261.0" width="5" height="1.9" fill="#53b987"/><path d="M1686.5 254.5V261.0" stroke="#53b987"/><rect x="1684.0" y="257.6" width="5" height="3.3" fill="#53b987"/><path d="M1692.5 256.2V266.9" stroke="#eb4d5c"/><rect x="1690.0" y="257.6" width="5" height="9.2" fill="#eb4d5c"/><path d="M1698.5 264.3V266.9" stroke="#53b987"/><rect x="1696.0" y="264.3" width="5" height="2.6" fill="#53b987"/><path d="M1704.5 263.5V264.3" stroke="#53b987"/><rect x="1702.0" y="263.5" width="5" height="1.0" fill="#53b987"/><path d="M1710.5 261.0V268.4" stroke="#eb4d5c"/><rect x="1708.0" y="262.3" width="5" height="4.3" fill="#eb4d5c"/><path d="M1716.5 266.3V270.4" stroke="#eb4d5c"/><rect x="1714.0" y="266.6" width="5" height="2.6" fill="#eb4d5c"/><path d="M1722.5 269.2V277.3" stroke="#eb4d5c"/><rect x="1720.0" y="269.2" width="5" height="6.7" fill="#eb4d5c"/><path d="M1728.5 275.9V280.5" stroke="#eb4d5c"/><rect x="1726.0" y="275.9" width="5" height="4.5" fill="#eb4d5c"/><path d="M1734.5 272.3V281.8" stroke="#53b987"/><rect x="1732.0" y="272.3" width="5" height="8.2" fill="#53b987"/><path d="M1740.5 271.6V274.0" stroke="#eb4d5c"/><rect x="1738.0" y="272.3" width="5" height="1.7" fill="#eb4d5c"/><path d="M1746.5 272.7V275.5" stroke="#53b987"/><rect x="1744.0" y="273.2" width="5" height="1.0" fill="#53b987"/><path d="M1752.5 268.1V273.2" stroke="#53b987"/><rect x="1750.0" y="268.1" width="5" height="5.2" fill="#53b987"/><path d="M1758.5 262.6V268.1" stroke="#53b987"/><rect x="1756.0" y="265.4" width="5" height="2.7" fill="#53b987"/><path d="M1764.5 265.4V268.5" stroke="#eb4d5c"/><rect x="1762.0" y="265.4" width="5" height="3.1" fill="#eb4d5c"/><path d="M1770.5 266.2V268.7" stroke="#53b987"/><rect x="1768.0" y="266.2" width="5" height="2.3" fill="#53b987"/><path d="M1776.5 266.2V284.3" stroke="#eb4d5c"/><rect x="1774.0" y="266.2" width="5" height="18.1" fill="#eb4d5c"/><path d="M1782.5 284.3V310.0" stroke="#eb4d5c"/><rect x="1780.0" y="284.3" width="5" height="25.6" fill="#eb4d5c"/><path d="M1788.5 304.3V309.9" stroke="#53b987"/><rect x="1786.0" y="304.3" width="5" height="5.6" fill="#53b987"/><path d="M1794.5 299.8V304.3" stroke="#53b987"/><rect x="1792.0" y="301.3" width="5" height="3.0" fill="#53b987"/><path d="M1800.5 301.3V312.3" stroke="#eb4d5c"/><rect x="1798.0" y="301.3" width="5" height="9.7" fill="#eb4d5c"/><path d="M1806.5 299.0V311.0" stroke="#53b987"/><rect x="1804.0" y="299.0" width="5" height="12.0" fill="#53b987"/><path d="M1812.5 291.2V299.0" stroke="#53b987"/><rect x="1810.0" y="291.2" width="5" height="7.8" fill="#53b987"/><path d="M1818.5 291.2V300.4" stroke="#eb4d5c"/><rect x="1816.0" y="291.2" width="5" height="7.6" fill="#eb4d5c"/><path d="M1824.5 295.2V301.0" stroke="#53b987"/><rect x="1822.0" y="295.2" width="5" height="4.4" fill="#53b987"/><path d="M1830.5 294.4V321.0" stroke="#eb4d5c"/><rect x="1828.0" y="295.2" width="5" height="25.7" fill="#eb4d5c"/><path d="M1836.5 314.2V322.2" stroke="#53b987"/><rect x="1834.0" y="314.2" width="5" height="6.8" fill="#53b987"/><path d="M1842.5 314.2V368.6" stroke="#eb4d5c"/><rect x="1840.0" y="314.2" width="5" height="18.3" fill="#eb4d5c"/><path d="M1848.5 332.9V355.0" stroke="#eb4d5c"/><rect x="1846.0" y="332.9" width="5" height="1.4" fill="#eb4d5c"/><path d="M1854.5 320.8V336.2" stroke="#53b987"/><rect x="1852.0" y="323.2" width="5" height="11.7" fill="#53b987"/><path d="M1860.5 320.7V328.5" stroke="#eb4d5c"/><rect x="1858.0" y="323.2" width="5" height="5.3" fill="#eb4d5c"/><path d="M1866.5 325.0V328.5" stroke="#53b987"/><rect x="1864.0" y="325.9" width="5" height="2.6" fill="#53b987"/><path d="M1872.5 323.1V325.9" stroke="#53b987"/><rect x="1870.0" y="323.1" width="5" height="2.8" fill="#53b987"/><path d="M1878.5 310.3V325.4" stroke="#53b987"/><rect x="1876.0" y="310.3" width="5" height="12.8" fill="#53b987"/><path d="M1884.5 310.1V310.3" stroke="#53b987"/><rect x="1882.0" y="310.1" width="5" height="1.0" fill="#53b987"/><path d="M1890.5 300.4V312.3" stroke="#53b987"/><rect x="1888.0" y="303.2" width="5" height="7.3" fill="#53b987"/><path d="M1896.5 303.2V309.6" stroke="#eb4d5c"/><rect x="1894.0" y="303.2" width="5" height="1.0" fill="#eb4d5c"/><path d="M1902.5 300.7V305.5" stroke="#53b987"/><rect x="1900.0" y="303.0" width="5" height="2.6" fill="#53b987"/><path d="M1908.5 304.2V310.4" stroke="#eb4d5c"/><rect x="1906.0" y="304.2" width="5" height="6.2" fill="#eb4d5c"/><path d="M1914.5 291.2V310.4" stroke="#53b987"/><rect x="1912.0" y="291.2" width="5" height="19.2" fill="#53b987"/><path d="M1920.5 291.0V292.1" stroke="#53b987"/><rect x="1918.0" y="291.0" width="5" height="1.0" fill="#53b987"/><path d="M1926.5 289.9V291.0" stroke="#53b987"/><rect x="1924.0" y="289.9" width="5" height="1.1" fill="#53b987"/><path d="M1932.5 289.9V291.3" stroke="#eb4d5c"/><rect x="1930.0" y="289.9" width="5" height="1.4" fill="#eb4d5c"/><path d="M1938.5 291.4V298.3" stroke="#eb4d5c"/><rect x="1936.0" y="291.4" width="5" height="6.9" fill="#eb4d5c"/><path d="M1944.5 291.7V298.6" stroke="#53b987"/><rect x="1942.0" y="292.9" width="5" height="5.5" fill="#53b987"/><path d="M1950.5 290.7V296.5" stroke="#eb4d5c"/><rect x="1948.0" y="292.9" width="5" height="3.6" fill="#eb4d5c"/><path d="M1956.5 289.9V296.5" stroke="#53b987"/><rect x="1954.0" y="289.9" width="5" height="6.6" fill="#53b987"/><path d="M1962.5 287.9V289.9" stroke="#53b987"/><rect x="1960.0" y="288.7" width="5" height="1.2" fill="#53b987"/><path d="M1968.5 288.7V297.8" stroke="#eb4d5c"/><rect x="1966.0" y="288.7" width="5" height="9.1" fill="#eb4d5c"/><path d="M1974.5 292.0V299.3" stroke="#53b987"/><rect x="1972.0" y="295.0" width="5" height="2.8" fill="#53b987"/><path d="M1980.5 295.0V299.4" stroke="#eb4d5c"/><rect x="1978.0" y="295.0" width="5" height="4.4" fill="#eb4d5c"/><path d="M1986.5 300.8V303.2" stroke="#eb4d5c"/><rect x="1984.0" y="300.8" width="5" height="1.0" fill="#eb4d5c"/><path d="M1992.5 296.8V301.2" stroke="#53b987"/><rect x="1990.0" y="297.5" width="5" height="3.4" fill="#53b987"/><path d="M1998.5 288.1V297.5" stroke="#53b987"/><rect x="1996.0" y="288.1" width="5" height="9.4" fill="#53b987"/><path d="M2004.5 285.9V290.6" stroke="#eb4d5c"/><rect x="2002.0" y="288.1" width="5" height="1.0" fill="#eb4d5c"/><path d="M2010.5 287.1V293.2" stroke="#eb4d5c"/><rect x="2008.0" y="288.8" width="5" height="3.4" fill="#eb4d5c"/><path d="M2016.5 291.3V292.1" stroke="#53b987"/><rect x="2014.0" y="291.3" width="5" height="1.0" fill="#53b987"/><path d="M2022.5 287.1V291.3" stroke="#53b987"/><rect x="2020.0" y="289.0" width="5" height="2.2" fill="#53b987"/><path d="M2028.5 289.0V290.4" stroke="#eb4d5c"/><rect x="2026.0" y="289.0" width="5" height="1.3" fill="#eb4d5c"/><path d="M2034.5 290.4V291.2" stroke="#eb4d5c"/><rect x="2032.0" y="290.4" width="5" height="1.0" fill="#eb4d5c"/><path d="M2040.5 290.6V291.0" stroke="#eb4d5c"/><rect x="2038.0" y="290.6" width="5" height="1.0" fill="#eb4d5c"/><path d="M2046.5 291.0V295.3" stroke="#eb4d5c"/><rect x="2044.0" y="291.0" width="5" height="4.3" fill="#eb4d5c"/><path d="M2052.5 289.6V295.3" stroke="#53b987"/><rect x="2050.0" y="289.6" width="5" height="5.7" fill="#53b987"/><path d="M2058.5 288.5V305.8" stroke="#eb4d5c"/><rect x="2056.0" y="288.5" width="5" height="17.3" fill="#eb4d5c"/><path d="M2064.5 293.0V318.7" stroke="#53b987"/><rect x="2062.0" y="293.0" width="5" height="12.8" fill="#53b987"/><path d="M2070.5 289.8V293.2" stroke="#53b987"/><rect x="2068.0" y="289.8" width="5" height="3.2" fill="#53b987"/><path d="M2076.5 290.1V298.2" stroke="#eb4d5c"/><rect x="2074.0" y="290.1" width="5" height="8.1" fill="#eb4d5c"/><path d="M2082.5 298.2V316.6" stroke="#eb4d5c"/><rect x="2080.0" y="298.2" width="5" height="18.4" fill="#eb4d5c"/><path d="M2088.5 310.2V330.8" stroke="#53b987"/><rect x="2086.0" y="311.2" width="5" height="5.2" fill="#53b987"/><path d="M2094.5 296.2V311.2" stroke="#53b987"/><rect x="2092.0" y="297.0" width="5" height="14.2" fill="#53b987"/><path d="M2100.5 295.6V302.8" stroke="#eb4d5c"/><rect x="2098.0" y="297.4" width="5" height="5.4" fill="#eb4d5c"/><path d="M2106.5 298.3V303.7" stroke="#53b987"/><rect x="2104.0" y="298.3" width="5" height="4.4" fill="#53b987"/><path d="M2112.5 299.1V322.2" stroke="#eb4d5c"/><rect x="2110.0" y="299.1" width="5" height="23.0" fill="#eb4d5c"/><path d="M2118.5 321.3V332.1" stroke="#eb4d5c"/><rect x="2116.0" y="323.2" width="5" height="8.9" fill="#eb4d5c"/><path d="M2124.5 314.9V332.1" stroke="#53b987"/><rect x="2122.0" y="314.9" width="5" height="17.2" fill="#53b987"/><path d="M2130.5 313.8V323.8" stroke="#eb4d5c"/><rect x="2128.0" y="313.8" width="5" height="7.9" fill="#eb4d5c"/><path d="M2136.5 313.6V321.6" stroke="#53b987"/><rect x="2134.0" y="313.9" width="5" height="7.5" fill="#53b987"/><path d="M2142.5 304.5V315.1" stroke="#53b987"/><rect x="2140.0" y="310.7" width="5" height="3.2" fill="#53b987"/><path d="M2148.5 306.3V317.4" stroke="#eb4d5c"/><rect x="2146.0" y="310.7" width="5" height="6.7" fill="#eb4d5c"/><path d="M2154.5 316.2V334.7" stroke="#eb4d5c"/><rect x="2152.0" y="317.4" width="5" height="4.0" fill="#eb4d5c"/><path d="M2160.5 319.8V321.3" stroke="#53b987"/><rect x="2158.0" y="319.8" width="5" height="1.6" fill="#53b987"/><path d="M2166.5 318.5V319.8" stroke="#eb4d5c"/><rect x="2164.0" y="318.5" width="5" height="1.3" fill="#eb4d5c"/><path d="M2172.5 317.5V319.8" stroke="#53b987"/><rect x="2170.0" y="317.5" width="5" height="2.3" fill="#53b987"/><path d="M2178.5 316.8V320.8" stroke="#53b987"/><rect x="2176.0" y="317.1" width="5" height="1.0" fill="#53b987"/><path d="M2184.5 316.6V317.1" stroke="#53b987"/><rect x="2182.0" y="316.6" width="5" height="1.0" fill="#53b987"/><path d="M2190.5 313.8V319.4" stroke="#eb4d5c"/><rect x="2188.0" y="315.7" width="5" height="3.7" fill="#eb4d5c"/><path d="M2196.5 319.4V331.0" stroke="#eb4d5c"/><rect x="2194.0" y="319.4" width="5" height="11.6" fill="#eb4d5c"/><path d="M2202.5 331.0V333.2" stroke="#eb4d5c"/><rect x="2200.0" y="331.0" width="5" height="2.2" fill="#eb4d5c"/><path d="M2208.5 331.6V335.3" stroke="#eb4d5c"/><rect x="2206.0" y="333.2" width="5" height="2.1" fill="#eb4d5c"/><path d="M2214.5 330.3V352.0" stroke="#eb4d5c"/><rect x="2212.0" y="335.3" width="5" height="6.0" fill="#eb4d5c"/><path d="M2220.5 338.9V342.9" stroke="#53b987"/><rect x="2218.0" y="338.9" width="5" height="2.5" fill="#53b987"/><path d="M2226.5 334.2V340.1" stroke="#53b987"/><rect x="2224.0" y="334.2" width="5" height="5.9" fill="#53b987"/><path d="M2232.5 333.0V334.1" stroke="#53b987"/><rect x="2230.0" y="333.0" width="5" height="1.0" fill="#53b987"/><path d="M2238.5 332.0V339.5" stroke="#eb4d5c"/><rect x="2236.0" y="333.0" width="5" height="3.9" fill="#eb4d5c"/><path d="M2244.5 336.9V339.2" stroke="#eb4d5c"/><rect x="2242.0" y="336.9" width="5" height="2.3" fill="#eb4d5c"/><path d="M2250.5 339.2V356.5" stroke="#eb4d5c"/><rect x="2248.0" y="339.2" width="5" height="9.7" fill="#eb4d5c"/><path d="M2256.5 343.7V348.0" stroke="#53b987"/><rect x="2254.0" y="343.7" width="5" height="4.3" fill="#53b987"/><path d="M2262.5 332.7V343.7" stroke="#53b987"/><rect x="2260.0" y="332.7" width="5" height="10.9" fill="#53b987"/><path d="M2268.5 333.2V339.9" stroke="#eb4d5c"/><rect x="2266.0" y="333.2" width="5" height="6.6" fill="#eb4d5c"/><path d="M2274.5 339.9V352.1" stroke="#eb4d5c"/><rect x="2272.0" y="339.9" width="5" height="12.2" fill="#eb4d5c"/><path d="M2280.5 331.6V353.3" stroke="#53b987"/><rect x="2278.0" y="332.4" width="5" height="19.7" fill="#53b987"/><path d="M2286.5 314.1V333.4" stroke="#53b987"/><rect x="2284.0" y="329.2" width="5" height="3.3" fill="#53b987"/><path d="M2292.5 329.8V330.6" stroke="#53b987"/><rect x="2290.0" y="329.8" width="5" height="1.0" fill="#53b987"/><path d="M2298.5 322.9V331.7" stroke="#53b987"/><rect x="2296.0" y="322.9" width="5" height="6.9" fill="#53b987"/><path d="M2304.5 322.2V333.9" stroke="#eb4d5c"/><rect x="2302.0" y="322.2" width="5" height="11.8" fill="#eb4d5c"/><path d="M2310.5 331.9V335.9" stroke="#eb4d5c"/><rect x="2308.0" y="333.9" width="5" height="2.0" fill="#eb4d5c"/><path d="M2316.5 335.8V341.0" stroke="#53b987"/><rect x="2314.0" y="335.8" width="5" height="1.0" fill="#53b987"/><path d="M2322.5 328.6V335.8" stroke="#53b987"/><rect x="2320.0" y="332.4" width="5" height="3.4" fill="#53b987"/><path d="M2328.5 329.3V332.4" stroke="#53b987"/><rect x="2326.0" y="330.0" width="5" height="2.4" fill="#53b987"/><path d="M2334.5 325.1V330.7" stroke="#53b987"/><rect x="2332.0" y="325.1" width="5" height="4.9" fill="#53b987"/><path d="M2340.5 318.2V325.1" stroke="#53b987"/><rect x="2338.0" y="318.2" width="5" height="7.0" fill="#53b987"/><path d="M2346.5 316.1V318.2" stroke="#53b987"/><rect x="2344.0" y="316.1" width="5" height="2.0" fill="#53b987"/><path d="M2352.5 309.0V316.3" stroke="#53b987"/><rect x="2350.0" y="309.0" width="5" height="7.1" fill="#53b987"/><path d="M2358.5 307.5V309.0" stroke="#53b987"/><rect x="2356.0" y="307.5" width="5" height="1.5" fill="#53b987"/><path d="M2364.5 307.5V312.1" stroke="#eb4d5c"/><rect x="2362.0" y="307.5" width="5" height="4.6" fill="#eb4d5c"/><path d="M2370.5 312.5V325.7" stroke="#eb4d5c"/><rect x="2368.0" y="312.5" width="5" height="13.2" fill="#eb4d5c"/><path d="M2376.5 315.5V325.7" stroke="#53b987"/><rect x="2374.0" y="321.6" width="5" height="4.1" fill="#53b987"/><path d="M2382.5 321.6V321.8" stroke="#eb4d5c"/><rect x="2380.0" y="321.6" width="5" height="1.0" fill="#eb4d5c"/><path d="M2388.5 315.1V324.3" stroke="#53b987"/><rect x="2386.0" y="315.1" width="5" height="6.7" fill="#53b987"/><path d="M2394.5 315.1V322.0" stroke="#eb4d5c"/><rect x="2392.0" y="315.1" width="5" height="6.8" fill="#eb4d5c"/><path d="M2400.5 316.4V323.3" stroke="#53b987"/><rect x="2398.0" y="321.2" width="5" height="1.0" fill="#53b987"/><path d="M2406.5 321.2V322.2" stroke="#eb4d5c"/><rect x="2404.0" y="321.2" width="5" height="1.0" fill="#eb4d5c"/><path d="M2412.5 312.7V322.3" stroke="#53b987"/><rect x="2410.0" y="312.7" width="5" height="9.6" fill="#53b987"/><path d="M2418.5 312.7V313.4" stroke="#eb4d5c"/><rect x="2416.0" y="312.7" width="5" height="1.0" fill="#eb4d5c"/><path d="M2424.5 312.6V318.3" stroke="#eb4d5c"/><rect x="2422.0" y="312.6" width="5" height="5.8" fill="#eb4d5c"/><path d="M2430.5 311.6V318.3" stroke="#53b987"/><rect x="2428.0" y="312.6" width="5" height="5.7" fill="#53b987"/><path d="M2436.5 312.6V320.2" stroke="#eb4d5c"/><rect x="2434.0" y="312.6" width="5" height="6.3" fill="#eb4d5c"/><path d="M2442.5 319.5V327.9" stroke="#eb4d5c"/><rect x="2440.0" y="319.5" width="5" height="8.5" fill="#eb4d5c"/><path d="M2448.5 327.9V336.5" stroke="#eb4d5c"/><rect x="2446.0" y="327.9" width="5" height="8.5" fill="#eb4d5c"/><path d="M2454.5 335.9V339.6" stroke="#eb4d5c"/><rect x="2452.0" y="336.5" width="5" height="1.3" fill="#eb4d5c"/><path d="M2460.5 337.8V338.7" stroke="#eb4d5c"/><rect x="2458.0" y="337.8" width="5" height="1.0" fill="#eb4d5c"/><path d="M2466.5 333.6V338.7" stroke="#53b987"/><rect x="2464.0" y="333.6" width="5" height="5.1" fill="#53b987"/><path d="M2472.5 333.6V342.0" stroke="#eb4d5c"/><rect x="2470.0" y="333.6" width="5" height="7.4" fill="#eb4d5c"/><path d="M2478.5 341.3V344.4" stroke="#eb4d5c"/><rect x="2476.0" y="341.3" width="5" height="3.1" fill="#eb4d5c"/><path d="M2484.5 344.2V347.5" stroke="#eb4d5c"/><rect x="2482.0" y="344.7" width="5" height="2.8" fill="#eb4d5c"/><path d="M2490.5 343.2V347.5" stroke="#53b987"/><rect x="2488.0" y="344.4" width="5" height="3.2" fill="#53b987"/><path d="M2496.5 338.0V344.4" stroke="#53b987"/><rect x="2494.0" y="338.0" width="5" height="6.3" fill="#53b987"/><path d="M2502.5 337.0V338.0" stroke="#53b987"/><rect x="2500.0" y="337.0" width="5" height="1.1" fill="#53b987"/><path d="M2508.5 334.6V337.0" stroke="#53b987"/><rect x="2506.0" y="334.6" width="5" height="2.4" fill="#53b987"/><path d="M2514.5 328.2V335.9" stroke="#53b987"/><rect x="2512.0" y="329.8" width="5" height="4.8" fill="#53b987"/><path d="M2520.5 329.7V332.4" stroke="#53b987"/><rect x="2518.0" y="329.7" width="5" height="1.0" fill="#53b987"/><path d="M2526.5 329.7V336.6" stroke="#eb4d5c"/><rect x="2524.0" y="329.7" width="5" height="6.8" fill="#eb4d5c"/><path d="M2532.5 335.4V340.3" stroke="#eb4d5c"/><rect x="2530.0" y="336.6" width="5" height="3.1" fill="#eb4d5c"/><path d="M2538.5 339.7V353.1" stroke="#eb4d5c"/><rect x="2536.0" y="339.7" width="5" height="13.4" fill="#eb4d5c"/><path d="M2544.5 350.4V354.3" stroke="#53b987"/><rect x="2542.0" y="352.8" width="5" height="1.0" fill="#53b987"/><path d="M2550.5 350.6V354.3" stroke="#53b987"/><rect x="2548.0" y="350.6" width="5" height="3.7" fill="#53b987"/><path d="M2556.5 350.6V367.1" stroke="#eb4d5c"/><rect x="2554.0" y="350.6" width="5" height="16.5" fill="#eb4d5c"/><path d="M2562.5 366.7V417.7" stroke="#eb4d5c"/><rect x="2560.0" y="366.7" width="5" height="16.5" fill="#eb4d5c"/><path d="M2568.5 370.1V402.0" stroke="#53b987"/><rect x="2566.0" y="371.0" width="5" height="13.0" fill="#53b987"/><path d="M2574.5 369.8V372.5" stroke="#eb4d5c"/><rect x="2572.0" y="369.8" width="5" height="2.0" fill="#eb4d5c"/><path d="M2580.5 369.6V381.2" stroke="#eb4d5c"/><rect x="2578.0" y="371.8" width="5" height="9.4" fill="#eb4d5c"/><path d="M2586.5 368.2V381.2" stroke="#53b987"/><rect x="2584.0" y="368.2" width="5" height="13.0" fill="#53b987"/><path d="M2592.5 360.6V368.2" stroke="#53b987"/><rect x="2590.0" y="360.6" width="5" height="7.5" fill="#53b987"/><path d="M2598.5 360.6V373.4" stroke="#eb4d5c"/><rect x="2596.0" y="360.6" width="5" height="12.1" fill="#eb4d5c"/><path d="M2604.5 373.0V376.0" stroke="#eb4d5c"/><rect x="2602.0" y="373.1" width="5" height="2.9" fill="#eb4d5c"/><path d="M2610.5 376.0V392.9" stroke="#eb4d5c"/><rect x="2608.0" y="376.0" width="5" height="2.8" fill="#eb4d5c"/><path d="M2616.5 378.2V385.8" stroke="#eb4d5c"/><rect x="2614.0" y="378.8" width="5" height="6.8" fill="#eb4d5c"/><path d="M2622.5 385.3V386.1" stroke="#eb4d5c"/><rect x="2620.0" y="385.5" width="5" height="1.0" fill="#eb4d5c"/><path d="M2628.5 386.1V394.8" stroke="#eb4d5c"/><rect x="2626.0" y="386.1" width="5" height="7.3" fill="#eb4d5c"/><path d="M2634.5 384.6V394.5" stroke="#53b987"/><rect x="2632.0" y="385.1" width="5" height="8.3" fill="#53b987"/><path d="M2640.5 383.2V385.1" stroke="#53b987"/><rect x="2638.0" y="383.9" width="5" height="1.3" fill="#53b987"/><path d="M2646.5 376.1V383.0" stroke="#53b987"/><rect x="2644.0" y="376.1" width="5" height="6.9" fill="#53b987"/><path d="M2652.5 371.9V383.0" stroke="#eb4d5c"/><rect x="2650.0" y="376.1" width="5" height="3.3" fill="#eb4d5c"/><path d="M2658.5 379.0V430.7" stroke="#eb4d5c"/><rect x="2656.0" y="379.0" width="5" height="40.5" fill="#eb4d5c"/><path d="M2664.5 399.1V442.8" stroke="#53b987"/><rect x="2662.0" y="399.1" width="5" height="20.4" fill="#53b987"/><path d="M2670.5 392.0V400.1" stroke="#53b987"/><rect x="2668.0" y="392.0" width="5" height="8.1" fill="#53b987"/><path d="M2676.5 391.5V422.6" stroke="#eb4d5c"/><rect x="2674.0" y="392.0" width="5" height="29.9" fill="#eb4d5c"/><path d="M2682.5 413.1V423.4" stroke="#53b987"/><rect x="2680.0" y="413.1" width="5" height="8.9" fill="#53b987"/><path d="M2688.5 413.9V435.7" stroke="#eb4d5c"/><rect x="2686.0" y="413.9" width="5" height="21.7" fill="#eb4d5c"/><path d="M2694.5 435.7V463.6" stroke="#eb4d5c"/><rect x="2692.0" y="435.7" width="5" height="18.2" fill="#eb4d5c"/><path d="M2700.5 438.7V453.9" stroke="#53b987"/><rect x="2698.0" y="438.7" width="5" height="15.2" fill="#53b987"/><path d="M2706.5 416.5V438.7" stroke="#53b987"/><rect x="2704.0" y="416.5" width="5" height="22.2" fill="#53b987"/><path d="M2712.5 412.8V416.5" stroke="#53b987"/><rect x="2710.0" y="412.8" width="5" height="3.8" fill="#53b987"/><path d="M2718.5 412.8V419.7" stroke="#eb4d5c"/><rect x="2716.0" y="412.8" width="5" height="6.9" fill="#eb4d5c"/><path d="M2724.5 419.0V421.0" stroke="#53b987"/><rect x="2722.0" y="419.0" width="5" height="1.0" fill="#53b987"/><path d="M2730.5 411.1V420.4" stroke="#53b987"/><rect x="2728.0" y="411.6" width="5" height="7.4" fill="#53b987"/><path d="M2736.5 408.2V427.6" stroke="#eb4d5c"/><rect x="2734.0" y="411.6" width="5" height="16.0" fill="#eb4d5c"/><path d="M2742.5 405.7V442.4" stroke="#53b987"/><rect x="2740.0" y="405.7" width="5" height="21.9" fill="#53b987"/><path d="M2748.5 404.0V405.7" stroke="#53b987"/><rect x="2746.0" y="405.0" width="5" height="1.0" fill="#53b987"/><path d="M2754.5 391.8V406.1" stroke="#53b987"/><rect x="2752.0" y="394.1" width="5" height="12.0" fill="#53b987"/><path d="M2760.5 385.1V394.1" stroke="#53b987"/><rect x="2758.0" y="386.6" width="5" height="7.5" fill="#53b987"/><path d="M2766.5 384.7V389.1" stroke="#eb4d5c"/><rect x="2764.0" y="386.6" width="5" height="2.5" fill="#eb4d5c"/><path d="M2772.5 389.1V394.0" stroke="#eb4d5c"/><rect x="2770.0" y="389.1" width="5" height="4.9" fill="#eb4d5c"/><path d="M2778.5 394.0V397.8" stroke="#eb4d5c"/><rect x="2776.0" y="394.0" width="5" height="3.8" fill="#eb4d5c"/><path d="M2784.5 387.7V397.8" stroke="#53b987"/><rect x="2782.0" y="387.7" width="5" height="10.1" fill="#53b987"/><path d="M2790.5 378.9V390.0" stroke="#53b987"/><rect x="2788.0" y="378.9" width="5" height="8.8" fill="#53b987"/><path d="M2796.5 378.9V380.8" stroke="#eb4d5c"/><rect x="2794.0" y="378.9" width="5" height="1.9" fill="#eb4d5c"/><path d="M2802.5 378.9V381.0" stroke="#eb4d5c"/><rect x="2800.0" y="380.8" width="5" height="1.0" fill="#eb4d5c"/><path d="M2808.5 378.3V412.2" stroke="#eb4d5c"/><rect x="2806.0" y="381.0" width="5" height="15.0" fill="#eb4d5c"/><path d="M2814.5 391.6V395.9" stroke="#53b987"/><rect x="2812.0" y="394.7" width="5" height="1.2" fill="#53b987"/><path d="M2820.5 384.4V396.2" stroke="#53b987"/><rect x="2818.0" y="384.4" width="5" height="11.6" fill="#53b987"/><path d="M2826.5 378.8V384.4" stroke="#53b987"/><rect x="2824.0" y="379.4" width="5" height="5.0" fill="#53b987"/><path d="M2832.5 379.4V379.6" stroke="#eb4d5c"/><rect x="2830.0" y="379.4" width="5" height="1.0" fill="#eb4d5c"/><path d="M2838.5 379.1V390.5" stroke="#eb4d5c"/><rect x="2836.0" y="379.6" width="5" height="11.0" fill="#eb4d5c"/><path d="M2844.5 389.7V393.5" stroke="#eb4d5c"/><rect x="2842.0" y="390.5" width="5" height="3.0" fill="#eb4d5c"/><path d="M2850.5 388.9V393.5" stroke="#53b987"/><rect x="2848.0" y="388.9" width="5" height="4.6" fill="#53b987"/><path d="M2856.5 375.2V388.9" stroke="#53b987"/><rect x="2854.0" y="375.2" width="5" height="13.8" fill="#53b987"/><path d="M2862.5 373.8V375.2" stroke="#53b987"/><rect x="2860.0" y="373.8" width="5" height="1.4" fill="#53b987"/><path d="M2868.5 373.8V394.5" stroke="#eb4d5c"/><rect x="2866.0" y="373.8" width="5" height="17.1" fill="#eb4d5c"/><path d="M2874.5 387.1V390.9" stroke="#53b987"/><rect x="2872.0" y="387.1" width="5" height="3.8" fill="#53b987"/><path d="M2880.5 372.2V387.1" stroke="#53b987"/><rect x="2878.0" y="372.2" width="5" height="14.9" fill="#53b987"/><path d="M2886.5 348.8V370.7" stroke="#53b987"/><rect x="2884.0" y="349.5" width="5" height="21.2" fill="#53b987"/><path d="M2892.5 315.5V349.5" stroke="#53b987"/><rect x="2890.0" y="339.1" width="5" height="10.4" fill="#53b987"/><path d="M2898.5 337.0V340.9" stroke="#eb4d5c"/><rect x="2896.0" y="339.1" width="5" height="1.4" fill="#eb4d5c"/><path d="M2904.5 337.8V353.8" stroke="#eb4d5c"/><rect x="2902.0" y="340.5" width="5" height="13.2" fill="#eb4d5c"/><path d="M2910.5 353.8V360.8" stroke="#eb4d5c"/><rect x="2908.0" y="353.8" width="5" height="7.0" fill="#eb4d5c"/><path d="M2916.5 351.9V360.8" stroke="#53b987"/><rect x="2914.0" y="351.9" width="5" height="8.8" fill="#53b987"/><path d="M2922.5 351.7V354.0" stroke="#eb4d5c"/><rect x="2920.0" y="351.9" width="5" height="2.1" fill="#eb4d5c"/><path d="M2928.5 354.0V361.2" stroke="#eb4d5c"/><rect x="2926.0" y="354.0" width="5" height="7.2" fill="#eb4d5c"/><path d="M2934.5 206.5V355.5" stroke="#53b987"/><rect x="2932.0" y="206.5" width="5" height="149.0" fill="#53b987"/></g><path d="M408.5 214.9 L414.5 215.3 L420.5 218.6 L426.5 221.1 L432.5 222.1 L438.5 222.1 L444.5 222.1 L450.5 222.0 L456.5 221.5 L462.5 220.3 L468.5 219.5 L474.5 219.0 L480.5 219.2 L486.5 219.2 L492.5 219.1 L498.5 219.0 L504.5 219.4 L510.5 219.4 L516.5 219.4 L522.5 219.5 L528.5 219.5 L534.5 219.7 L540.5 220.0 L546.5 220.3 L552.5 220.6 L558.5 220.9 L564.5 221.1 L570.5 221.3 L576.5 221.6 L582.5 221.7 L588.5 222.2 L594.5 222.9 L600.5 223.3 L606.5 223.6 L612.5 223.8 L618.5 223.9 L624.5 224.1 L630.5 224.2 L636.5 224.3 L642.5 224.7 L648.5 225.0 L654.5 225.0 L660.5 225.0 L666.5 225.1 L672.5 226.0 L678.5 226.9 L684.5 227.6 L690.5 228.7 L696.5 229.7 L702.5 230.8 L708.5 232.1 L714.5 233.3 L720.5 234.5 L726.5 235.5 L732.5 236.8 L738.5 238.1 L744.5 240.5 L750.5 243.5 L756.5 246.6 L762.5 250.0 L768.5 252.8 L774.5 255.4 L780.5 257.6 L786.5 259.9 L792.5 262.3 L798.5 264.8 L804.5 267.4 L810.5 269.9 L816.5 272.0 L822.5 274.1 L828.5 276.2 L834.5 278.6 L840.5 281.0 L846.5 283.1 L852.5 284.6 L858.5 286.0 L864.5 286.5 L870.5 286.6 L876.5 286.8 L882.5 286.8 L888.5 286.4 L894.5 286.0 L900.5 285.7 L906.5 285.7 L912.5 285.5 L918.5 285.3 L924.5 283.9 L930.5 281.8 L936.5 279.6 L942.5 277.4 L948.5 275.6 L954.5 273.8 L960.5 272.3 L966.5 271.1 L972.5 269.8 L978.5 268.6 L984.5 267.3 L990.5 266.0 L996.5 265.5 L1002.5 265.0 L1008.5 264.4 L1014.5 263.8 L1020.5 263.3 L1026.5 262.9 L1032.5 262.3 L1038.5 261.6 L1044.5 261.7 L1050.5 262.4 L1056.5 263.3 L1062.5 264.2 L1068.5 265.3 L1074.5 266.6 L1080.5 267.6 L1086.5 268.3 L1092.5 269.3 L1098.5 270.3 L1104.5 271.0 L1110.5 271.7 L1116.5 272.0 L1122.5 272.5 L1128.5 272.6 L1134.5 272.9 L1140.5 273.1 L1146.5 273.2 L1152.5 273.3 L1158.5 273.0 L1164.5 272.4 L1170.5 271.5 L1176.5 270.5 L1182.5 269.4 L1188.5 268.4 L1194.5 267.3 L1200.5 266.1 L1206.5 264.8 L1212.5 263.6 L1218.5 263.0 L1224.5 262.1 L1230.5 260.9 L1236.5 259.4 L1242.5 258.0 L1248.5 256.6 L1254.5 255.1 L1260.5 253.9 L1266.5 252.7 L1272.5 251.0 L1278.5 249.5 L1284.5 248.4 L1290.5 247.6 L1296.5 246.9 L1302.5 246.1 L1308.5 245.2 L1314.5 244.5 L1320.5 243.7 L1326.5 243.2 L1332.5 242.7 L1338.5 242.4 L1344.5 242.6 L1350.5 243.0 L1356.5 243.4 L1362.5 243.6 L1368.5 243.9 L1374.5 244.4 L1380.5 244.8 L1386.5 245.3 L1392.5 245.9 L1398.5 246.2 L1404.5 246.7 L1410.5 247.3 L1416.5 248.2 L1422.5 249.2 L1428.5 249.5 L1434.5 249.5 L1440.5 248.9 L1446.5 248.4 L1452.5 248.0 L1458.5 247.6 L1464.5 246.8 L1470.5 246.0 L1476.5 245.4 L1482.5 244.7 L1488.5 244.5 L1494.5 244.0 L1500.5 243.4 L1506.5 242.4 L1512.5 241.7 L1518.5 240.9 L1524.5 240.1 L1530.5 239.5 L1536.5 238.6 L1542.5 238.0 L1548.5 237.2 L1554.5 236.3 L1560.5 235.6 L1566.5 234.7 L1572.5 234.1 L1578.5 233.8 L1584.5 233.9 L1590.5 234.1 L1596.5 233.9 L1602.5 233.5 L1608.5 233.7 L1614.5 234.4 L1620.5 235.5 L1626.5 236.5 L1632.5 237.5 L1638.5 238.5 L1644.5 239.6 L1650.5 240.7 L1656.5 241.9 L1662.5 242.9 L1668.5 243.9 L1674.5 245.1 L1680.5 246.2 L1686.5 247.2 L1692.5 248.5 L1698.5 249.7 L1704.5 251.0 L1710.5 252.2 L1716.5 253.8 L1722.5 255.5 L1728.5 257.4 L1734.5 259.0 L1740.5 260.6 L1746.5 262.1 L1752.5 263.2 L1758.5 263.8 L1764.5 264.2 L1770.5 264.3 L1776.5 265.2 L1782.5 267.0 L1788.5 268.6 L1794.5 269.9 L1800.5 271.6 L1806.5 272.8 L1812.5 274.0 L1818.5 275.3 L1824.5 276.6 L1830.5 278.6 L1836.5 280.3 L1842.5 282.8 L1848.5 285.1 L1854.5 287.1 L1860.5 289.4 L1866.5 291.6 L1872.5 293.5 L1878.5 295.0 L1884.5 296.6 L1890.5 297.8 L1896.5 299.0 L1902.5 299.9 L1908.5 300.9 L1914.5 301.5 L1920.5 302.1 L1926.5 302.6 L1932.5 303.4 L1938.5 304.5 L1944.5 305.3 L1950.5 306.3 L1956.5 306.5 L1962.5 305.8 L1968.5 305.6 L1974.5 305.4 L1980.5 305.0 L1986.5 305.1 L1992.5 305.3 L1998.5 304.9 L2004.5 304.7 L2010.5 303.8 L2016.5 303.0 L2022.5 301.5 L2028.5 300.1 L2034.5 299.0 L2040.5 297.7 L2046.5 296.7 L2052.5 295.6 L2058.5 295.5 L2064.5 294.9 L2070.5 294.4 L2076.5 294.2 L2082.5 294.7 L2088.5 294.7 L2094.5 294.9 L2100.5 295.3 L2106.5 295.6 L2112.5 296.6 L2118.5 297.7 L2124.5 298.5 L2130.5 299.3 L2136.5 300.1 L2142.5 300.9 L2148.5 301.5 L2154.5 302.4 L2160.5 303.1 L2166.5 303.7 L2172.5 304.3 L2178.5 305.3 L2184.5 306.2 L2190.5 307.2 L2196.5 308.5 L2202.5 309.9 L2208.5 311.4 L2214.5 313.1 L2220.5 314.7 L2226.5 316.0 L2232.5 317.5 L2238.5 318.5 L2244.5 320.0 L2250.5 322.0 L2256.5 323.5 L2262.5 324.1 L2268.5 325.0 L2274.5 326.9 L2280.5 327.8 L2286.5 328.9 L2292.5 329.1 L2298.5 328.8 L2304.5 329.5 L2310.5 329.9 L2316.5 330.7 L2322.5 331.4 L2328.5 331.8 L2334.5 331.9 L2340.5 331.9 L2346.5 331.8 L2352.5 331.5 L2358.5 331.1 L2364.5 331.0 L2370.5 331.2 L2376.5 330.9 L2382.5 330.5 L2388.5 329.8 L2394.5 329.2 L2400.5 328.6 L2406.5 328.2 L2412.5 327.5 L2418.5 326.7 L2424.5 326.0 L2430.5 324.8 L2436.5 324.0 L2442.5 323.9 L2448.5 323.7 L2454.5 323.3 L2460.5 323.5 L2466.5 323.6 L2472.5 324.0 L2478.5 324.7 L2484.5 325.2 L2490.5 325.5 L2496.5 325.5 L2502.5 325.7 L2508.5 325.8 L2514.5 326.0 L2520.5 326.4 L2526.5 327.1 L2532.5 328.1 L2538.5 329.6 L2544.5 331.0 L2550.5 331.8 L2556.5 333.3 L2562.5 335.3 L2568.5 337.2 L2574.5 338.9 L2580.5 340.9 L2586.5 342.4 L2592.5 344.0 L2598.5 346.0 L2604.5 347.9 L2610.5 350.1 L2616.5 352.3 L2622.5 354.3 L2628.5 356.2 L2634.5 357.7 L2640.5 359.2 L2646.5 360.7 L2652.5 361.9 L2658.5 364.4 L2664.5 366.2 L2670.5 367.7 L2676.5 370.5 L2682.5 373.1 L2688.5 376.4 L2694.5 380.6 L2700.5 384.2 L2706.5 386.9 L2712.5 389.3 L2718.5 391.5 L2724.5 393.8 L2730.5 395.8 L2736.5 397.8 L2742.5 398.6 L2748.5 399.7 L2754.5 400.4 L2760.5 400.6 L2766.5 401.3 L2772.5 402.4 L2778.5 403.3 L2784.5 403.7 L2790.5 403.7 L2796.5 403.5 L2802.5 403.3 L2808.5 403.4 L2814.5 403.7 L2820.5 403.8 L2826.5 403.9 L2832.5 403.9 L2838.5 402.9 L2844.5 402.7 L2850.5 402.6 L2856.5 401.1 L2862.5 399.7 L2868.5 398.3 L2874.5 396.0 L2880.5 393.8 L2886.5 391.6 L2892.5 389.1 L2898.5 386.5 L2904.5 384.3 L2910.5 382.6 L2916.5 380.1 L2922.5 378.4 L2928.5 376.9 L2934.5 370.6" fill="none" stroke="#4a968c" stroke-width="1"/><path d="M408.5 214.9 L414.5 215.3 L420.5 218.6 L426.5 221.1 L432.5 222.1 L438.5 222.1 L444.5 222.1 L450.5 222.0 L456.5 221.5 L462.5 220.3 L468.5 219.9 L474.5 219.8 L480.5 219.3 L486.5 218.4 L492.5 217.6 L498.5 217.2 L504.5 217.5 L510.5 217.4 L516.5 217.5 L522.5 218.7 L528.5 219.5 L534.5 220.6 L540.5 221.0 L546.5 221.9 L552.5 222.9 L558.5 223.8 L564.5 224.1 L570.5 224.8 L576.5 225.7 L582.5 226.3 L588.5 227.1 L594.5 228.4 L600.5 229.7 L606.5 230.4 L612.5 230.8 L618.5 230.8 L624.5 230.7 L630.5 230.4 L636.5 229.6 L642.5 229.0 L648.5 228.4 L654.5 226.1 L660.5 224.2 L666.5 223.0 L672.5 224.4 L678.5 226.1 L684.5 228.0 L690.5 230.7 L696.5 233.7 L702.5 237.1 L708.5 240.9 L714.5 245.6 L720.5 249.7 L726.5 253.2 L732.5 255.1 L738.5 257.3 L744.5 263.0 L750.5 269.3 L756.5 276.5 L762.5 283.8 L768.5 289.2 L774.5 294.4 L780.5 299.0 L786.5 303.5 L792.5 307.3 L798.5 311.1 L804.5 311.3 L810.5 309.7 L816.5 305.7 L822.5 301.3 L828.5 298.6 L834.5 296.0 L840.5 294.2 L846.5 292.8 L852.5 291.5 L858.5 289.6 L864.5 285.3 L870.5 280.9 L876.5 278.2 L882.5 275.3 L888.5 271.6 L894.5 267.5 L900.5 263.8 L906.5 260.8 L912.5 257.8 L918.5 255.2 L924.5 254.9 L930.5 254.7 L936.5 255.0 L942.5 255.5 L948.5 256.8 L954.5 257.9 L960.5 258.9 L966.5 259.8 L972.5 260.1 L978.5 261.0 L984.5 261.6 L990.5 262.4 L996.5 263.3 L1002.5 264.1 L1008.5 264.8 L1014.5 266.1 L1020.5 267.1 L1026.5 267.9 L1032.5 268.9 L1038.5 268.6 L1044.5 268.7 L1050.5 270.2 L1056.5 271.6 L1062.5 272.9 L1068.5 274.5 L1074.5 275.9 L1080.5 276.7 L1086.5 277.3 L1092.5 278.9 L1098.5 281.4 L1104.5 282.6 L1110.5 282.6 L1116.5 281.2 L1122.5 280.5 L1128.5 278.6 L1134.5 276.7 L1140.5 275.6 L1146.5 274.4 L1152.5 272.1 L1158.5 269.1 L1164.5 265.8 L1170.5 261.9 L1176.5 258.7 L1182.5 255.0 L1188.5 252.1 L1194.5 249.3 L1200.5 246.0 L1206.5 242.6 L1212.5 239.8 L1218.5 238.4 L1224.5 238.0 L1230.5 238.1 L1236.5 238.2 L1242.5 238.5 L1248.5 239.0 L1254.5 239.3 L1260.5 240.0 L1266.5 241.0 L1272.5 241.1 L1278.5 240.9 L1284.5 241.6 L1290.5 242.9 L1296.5 243.9 L1302.5 244.8 L1308.5 244.4 L1314.5 244.7 L1320.5 245.1 L1326.5 245.9 L1332.5 247.2 L1338.5 247.9 L1344.5 248.1 L1350.5 248.0 L1356.5 248.2 L1362.5 247.6 L1368.5 248.4 L1374.5 249.1 L1380.5 249.4 L1386.5 249.1 L1392.5 249.3 L1398.5 249.7 L1404.5 250.4 L1410.5 251.0 L1416.5 252.7 L1422.5 255.2 L1428.5 255.7 L1434.5 254.6 L1440.5 252.3 L1446.5 250.3 L1452.5 247.5 L1458.5 245.1 L1464.5 241.8 L1470.5 238.9 L1476.5 235.3 L1482.5 231.4 L1488.5 229.4 L1494.5 228.4 L1500.5 228.4 L1506.5 227.8 L1512.5 228.1 L1518.5 228.0 L1524.5 228.0 L1530.5 228.5 L1536.5 227.8 L1542.5 227.4 L1548.5 226.5 L1554.5 226.0 L1560.5 225.9 L1566.5 225.9 L1572.5 226.6 L1578.5 228.4 L1584.5 231.8 L1590.5 235.0 L1596.5 238.6 L1602.5 241.8 L1608.5 245.1 L1614.5 248.8 L1620.5 252.2 L1626.5 255.8 L1632.5 257.8 L1638.5 259.0 L1644.5 258.8 L1650.5 258.6 L1656.5 259.2 L1662.5 259.3 L1668.5 260.2 L1674.5 260.4 L1680.5 260.4 L1686.5 260.0 L1692.5 261.0 L1698.5 261.7 L1704.5 262.4 L1710.5 263.0 L1716.5 263.5 L1722.5 265.3 L1728.5 266.9 L1734.5 267.8 L1740.5 269.1 L1746.5 270.6 L1752.5 270.8 L1758.5 270.9 L1764.5 271.4 L1770.5 271.3 L1776.5 272.8 L1782.5 276.2 L1788.5 278.6 L1794.5 281.5 L1800.5 285.2 L1806.5 287.8 L1812.5 290.1 L1818.5 293.4 L1824.5 296.1 L1830.5 301.6 L1836.5 304.6 L1842.5 306.8 L1848.5 309.8 L1854.5 312.0 L1860.5 313.8 L1866.5 316.5 L1872.5 319.7 L1878.5 320.8 L1884.5 322.3 L1890.5 320.5 L1896.5 319.5 L1902.5 316.6 L1908.5 314.2 L1914.5 311.0 L1920.5 307.2 L1926.5 303.6 L1932.5 300.5 L1938.5 299.3 L1944.5 297.5 L1950.5 296.9 L1956.5 295.4 L1962.5 294.0 L1968.5 292.8 L1974.5 293.1 L1980.5 294.0 L1986.5 295.1 L1992.5 295.7 L1998.5 294.7 L2004.5 294.3 L2010.5 293.9 L2016.5 294.0 L2022.5 294.0 L2028.5 293.3 L2034.5 292.9 L2040.5 292.0 L2046.5 291.4 L2052.5 290.6 L2058.5 292.4 L2064.5 292.8 L2070.5 292.6 L2076.5 293.3 L2082.5 296.0 L2088.5 298.1 L2094.5 298.8 L2100.5 299.9 L2106.5 300.2 L2112.5 303.5 L2118.5 306.1 L2124.5 308.3 L2130.5 311.5 L2136.5 313.1 L2142.5 312.5 L2148.5 313.1 L2154.5 315.5 L2160.5 317.2 L2166.5 319.4 L2172.5 318.9 L2178.5 317.4 L2184.5 317.6 L2190.5 317.4 L2196.5 319.1 L2202.5 321.3 L2208.5 323.1 L2214.5 325.1 L2220.5 327.0 L2226.5 328.5 L2232.5 330.0 L2238.5 332.0 L2244.5 334.2 L2250.5 337.2 L2256.5 338.5 L2262.5 338.4 L2268.5 338.9 L2274.5 339.9 L2280.5 339.3 L2286.5 338.8 L2292.5 338.5 L2298.5 337.1 L2304.5 336.5 L2310.5 335.2 L2316.5 334.5 L2322.5 334.4 L2328.5 333.4 L2334.5 330.7 L2340.5 329.3 L2346.5 328.0 L2352.5 325.9 L2358.5 324.4 L2364.5 322.2 L2370.5 321.2 L2376.5 319.8 L2382.5 318.7 L2388.5 317.2 L2394.5 316.9 L2400.5 317.2 L2406.5 317.8 L2412.5 318.2 L2418.5 318.8 L2424.5 319.4 L2430.5 318.1 L2436.5 317.8 L2442.5 318.4 L2448.5 320.6 L2454.5 322.1 L2460.5 323.9 L2466.5 325.0 L2472.5 327.9 L2478.5 331.0 L2484.5 333.9 L2490.5 337.1 L2496.5 339.0 L2502.5 339.9 L2508.5 339.7 L2514.5 338.9 L2520.5 338.0 L2526.5 338.3 L2532.5 338.2 L2538.5 339.0 L2544.5 339.6 L2550.5 340.2 L2556.5 343.1 L2562.5 347.7 L2568.5 351.4 L2574.5 355.5 L2580.5 360.7 L2586.5 363.9 L2592.5 366.0 L2598.5 367.9 L2604.5 370.2 L2610.5 373.1 L2616.5 374.9 L2622.5 375.2 L2628.5 377.4 L2634.5 378.8 L2640.5 379.0 L2646.5 379.8 L2652.5 381.7 L2658.5 386.4 L2664.5 388.7 L2670.5 390.0 L2676.5 393.6 L2682.5 396.3 L2688.5 400.6 L2694.5 407.5 L2700.5 412.9 L2706.5 417.0 L2712.5 420.3 L2718.5 420.4 L2724.5 422.3 L2730.5 424.3 L2736.5 424.9 L2742.5 424.1 L2748.5 421.1 L2754.5 415.1 L2760.5 409.9 L2766.5 407.1 L2772.5 405.3 L2778.5 403.1 L2784.5 399.9 L2790.5 396.7 L2796.5 392.0 L2802.5 389.5 L2808.5 388.6 L2814.5 388.7 L2820.5 388.4 L2826.5 387.5 L2832.5 386.0 L2838.5 385.3 L2844.5 385.9 L2850.5 386.9 L2856.5 386.3 L2862.5 385.6 L2868.5 385.1 L2874.5 384.3 L2880.5 383.1 L2886.5 380.1 L2892.5 376.1 L2898.5 371.1 L2904.5 367.1 L2910.5 364.3 L2916.5 362.0 L2922.5 360.0 L2928.5 357.0 L2934.5 338.9" fill="none" stroke="#8d4fb8" stroke-width="1"/><path d="M408.5 214.9 L414.5 215.3 L420.5 218.6 L426.5 221.1 L432.5 222.1 L438.5 223.6 L444.5 224.8 L450.5 224.0 L456.5 221.8 L462.5 218.4 L468.5 216.3 L474.5 214.7 L480.5 214.7 L486.5 215.0 L492.5 216.9 L498.5 218.1 L504.5 220.3 L510.5 220.0 L516.5 219.9 L522.5 220.4 L528.5 220.9 L534.5 220.9 L540.5 222.0 L546.5 223.9 L552.5 225.3 L558.5 226.7 L564.5 227.3 L570.5 227.6 L576.5 227.4 L582.5 227.3 L588.5 227.5 L594.5 229.5 L600.5 231.7 L606.5 233.5 L612.5 234.3 L618.5 234.2 L624.5 231.9 L630.5 229.2 L636.5 225.8 L642.5 223.7 L648.5 222.5 L654.5 220.3 L660.5 219.3 L666.5 220.1 L672.5 225.1 L678.5 229.6 L684.5 235.7 L690.5 242.2 L696.5 247.3 L702.5 249.1 L708.5 252.2 L714.5 255.4 L720.5 257.1 L726.5 259.0 L732.5 261.1 L738.5 262.3 L744.5 270.5 L750.5 281.5 L756.5 294.0 L762.5 306.5 L768.5 316.1 L774.5 318.3 L780.5 316.6 L786.5 312.9 L792.5 308.1 L798.5 306.2 L804.5 304.3 L810.5 302.9 L816.5 298.5 L822.5 294.4 L828.5 291.0 L834.5 287.6 L840.5 285.6 L846.5 287.0 L852.5 288.5 L858.5 288.3 L864.5 283.0 L870.5 276.1 L876.5 269.4 L882.5 262.2 L888.5 254.8 L894.5 252.1 L900.5 251.5 L906.5 252.2 L912.5 253.5 L918.5 255.5 L924.5 257.8 L930.5 257.9 L936.5 257.8 L942.5 257.6 L948.5 258.0 L954.5 258.0 L960.5 260.0 L966.5 261.9 L972.5 262.7 L978.5 263.9 L984.5 265.2 L990.5 264.8 L996.5 264.8 L1002.5 265.6 L1008.5 265.7 L1014.5 266.9 L1020.5 269.5 L1026.5 271.0 L1032.5 272.1 L1038.5 271.5 L1044.5 270.6 L1050.5 270.9 L1056.5 272.2 L1062.5 273.6 L1068.5 277.5 L1074.5 281.2 L1080.5 282.5 L1086.5 282.4 L1092.5 284.2 L1098.5 285.2 L1104.5 284.0 L1110.5 282.7 L1116.5 280.0 L1122.5 276.7 L1128.5 272.1 L1134.5 269.4 L1140.5 268.5 L1146.5 268.9 L1152.5 267.6 L1158.5 266.2 L1164.5 262.1 L1170.5 255.3 L1176.5 248.5 L1182.5 242.3 L1188.5 238.1 L1194.5 236.6 L1200.5 236.6 L1206.5 236.8 L1212.5 237.3 L1218.5 238.8 L1224.5 239.3 L1230.5 239.6 L1236.5 239.6 L1242.5 239.7 L1248.5 239.3 L1254.5 239.4 L1260.5 240.5 L1266.5 242.5 L1272.5 242.5 L1278.5 242.5 L1284.5 243.9 L1290.5 245.4 L1296.5 245.4 L1302.5 247.1 L1308.5 246.4 L1314.5 245.6 L1320.5 244.7 L1326.5 246.4 L1332.5 247.3 L1338.5 249.4 L1344.5 250.7 L1350.5 251.2 L1356.5 249.9 L1362.5 248.0 L1368.5 247.3 L1374.5 247.6 L1380.5 247.6 L1386.5 248.3 L1392.5 250.7 L1398.5 252.2 L1404.5 253.3 L1410.5 254.4 L1416.5 257.0 L1422.5 259.7 L1428.5 259.2 L1434.5 255.9 L1440.5 250.3 L1446.5 243.6 L1452.5 235.4 L1458.5 231.0 L1464.5 227.7 L1470.5 227.5 L1476.5 226.9 L1482.5 227.4 L1488.5 227.8 L1494.5 229.2 L1500.5 229.4 L1506.5 228.8 L1512.5 228.8 L1518.5 228.1 L1524.5 226.9 L1530.5 227.7 L1536.5 226.8 L1542.5 226.0 L1548.5 225.0 L1554.5 225.0 L1560.5 224.2 L1566.5 225.1 L1572.5 227.1 L1578.5 231.9 L1584.5 238.6 L1590.5 245.9 L1596.5 252.2 L1602.5 256.4 L1608.5 258.3 L1614.5 259.0 L1620.5 258.6 L1626.5 259.4 L1632.5 259.2 L1638.5 259.7 L1644.5 258.6 L1650.5 258.7 L1656.5 259.0 L1662.5 259.4 L1668.5 260.7 L1674.5 262.1 L1680.5 262.1 L1686.5 261.0 L1692.5 262.7 L1698.5 262.6 L1704.5 262.7 L1710.5 263.8 L1716.5 266.1 L1722.5 267.9 L1728.5 271.1 L1734.5 272.9 L1740.5 274.4 L1746.5 275.2 L1752.5 273.6 L1758.5 270.6 L1764.5 269.8 L1770.5 268.3 L1776.5 270.5 L1782.5 278.9 L1788.5 286.6 L1794.5 293.2 L1800.5 302.1 L1806.5 305.1 L1812.5 301.3 L1818.5 300.2 L1824.5 299.0 L1830.5 301.0 L1836.5 304.1 L1842.5 312.3 L1848.5 319.4 L1854.5 325.0 L1860.5 326.5 L1866.5 328.9 L1872.5 327.0 L1878.5 322.2 L1884.5 319.6 L1890.5 314.5 L1896.5 310.2 L1902.5 306.2 L1908.5 306.2 L1914.5 302.4 L1920.5 300.0 L1926.5 297.1 L1932.5 294.8 L1938.5 292.3 L1944.5 292.7 L1950.5 293.8 L1956.5 293.8 L1962.5 293.3 L1968.5 293.2 L1974.5 293.6 L1980.5 294.2 L1986.5 296.5 L1992.5 298.2 L1998.5 296.3 L2004.5 295.0 L2010.5 293.6 L2016.5 291.5 L2022.5 289.9 L2028.5 290.3 L2034.5 290.7 L2040.5 290.5 L2046.5 291.3 L2052.5 291.4 L2058.5 294.5 L2064.5 295.0 L2070.5 294.7 L2076.5 295.3 L2082.5 300.7 L2088.5 301.8 L2094.5 302.6 L2100.5 305.2 L2106.5 305.2 L2112.5 306.3 L2118.5 310.5 L2124.5 314.1 L2130.5 317.9 L2136.5 321.0 L2142.5 318.7 L2148.5 315.7 L2154.5 317.0 L2160.5 316.6 L2166.5 317.8 L2172.5 319.2 L2178.5 319.1 L2184.5 318.2 L2190.5 318.1 L2196.5 320.3 L2202.5 323.5 L2208.5 327.1 L2214.5 332.1 L2220.5 336.0 L2226.5 336.6 L2232.5 336.5 L2238.5 336.9 L2244.5 336.4 L2250.5 338.4 L2256.5 340.3 L2262.5 340.3 L2268.5 340.9 L2274.5 343.4 L2280.5 340.1 L2286.5 337.2 L2292.5 336.7 L2298.5 333.3 L2304.5 329.6 L2310.5 330.3 L2316.5 331.7 L2322.5 332.2 L2328.5 333.6 L2334.5 331.8 L2340.5 328.3 L2346.5 324.4 L2352.5 319.7 L2358.5 315.2 L2364.5 312.6 L2370.5 314.1 L2376.5 315.2 L2382.5 317.7 L2388.5 319.3 L2394.5 321.2 L2400.5 320.3 L2406.5 320.4 L2412.5 318.6 L2418.5 318.3 L2424.5 317.6 L2430.5 315.8 L2436.5 315.2 L2442.5 318.2 L2448.5 322.8 L2454.5 326.7 L2460.5 332.0 L2466.5 334.9 L2472.5 337.5 L2478.5 339.1 L2484.5 341.1 L2490.5 342.2 L2496.5 343.1 L2502.5 342.3 L2508.5 340.3 L2514.5 336.8 L2520.5 333.8 L2526.5 333.5 L2532.5 334.1 L2538.5 337.8 L2544.5 342.4 L2550.5 346.5 L2556.5 352.6 L2562.5 361.4 L2568.5 365.0 L2574.5 368.7 L2580.5 374.9 L2586.5 375.1 L2592.5 370.6 L2598.5 370.9 L2604.5 371.7 L2610.5 371.2 L2616.5 374.7 L2622.5 379.8 L2628.5 384.0 L2634.5 385.8 L2640.5 386.8 L2646.5 384.9 L2652.5 383.6 L2658.5 388.8 L2664.5 391.6 L2670.5 393.2 L2676.5 402.4 L2682.5 409.1 L2688.5 412.4 L2694.5 423.3 L2700.5 432.7 L2706.5 431.6 L2712.5 431.5 L2718.5 428.3 L2724.5 421.3 L2730.5 415.9 L2736.5 418.1 L2742.5 416.7 L2748.5 413.8 L2754.5 408.8 L2760.5 403.8 L2766.5 396.1 L2772.5 393.8 L2778.5 392.3 L2784.5 391.1 L2790.5 389.5 L2796.5 387.9 L2802.5 385.3 L2808.5 384.9 L2814.5 386.3 L2820.5 387.4 L2826.5 387.1 L2832.5 386.8 L2838.5 385.7 L2844.5 385.5 L2850.5 386.4 L2856.5 385.5 L2862.5 384.4 L2868.5 384.5 L2874.5 383.2 L2880.5 379.8 L2886.5 374.7 L2892.5 367.8 L2898.5 357.7 L2904.5 351.0 L2910.5 348.7 L2916.5 349.2 L2922.5 352.2 L2928.5 356.3 L2934.5 326.9" fill="none" stroke="#b59a72" stroke-width="1"/><g font-family="Liberation Sans, sans-serif" font-size="11.5" fill="#8f929b"><path d="M2968.5 241.7H2972.5" stroke="#8a8d96"/><text x="2974" y="245.7">28040.0000</text><path d="M2968.5 274.7H2972.5" stroke="#8a8d96"/><text x="2974" y="278.7">28000.0000</text><path d="M2968.5 307.8H2972.5" stroke="#8a8d96"/><text x="2974" y="311.8">27960.0000</text><path d="M2968.5 340.8H2972.5" stroke="#8a8d96"/><text x="2974" y="344.8">27920.0000</text><path d="M2968.5 373.8H2972.5" stroke="#8a8d96"/><text x="2974" y="377.8">27880.0000</text><path d="M2968.5 406.8H2972.5" stroke="#8a8d96"/><text x="2974" y="410.8">27840.0000</text><path d="M2968.5 439.9H2972.5" stroke="#8a8d96"/><text x="2974" y="443.9">27800.0000</text><path d="M2968.5 472.9H2972.5" stroke="#8a8d96"/><text x="2974" y="476.9">27760.0000</text><path d="M2968.5 490.3H2972.5" stroke="#8a8d96"/><text x="2975" y="494.3">40</text><path d="M2968.5 521.5H2972.5" stroke="#8a8d96"/><text x="2975" y="525.5">30</text><path d="M2968.5 552.6H2972.5" stroke="#8a8d96"/><text x="2975" y="556.6">20</text><path d="M2968.5 583.8H2972.5" stroke="#8a8d96"/><text x="2975" y="587.8">10</text><path d="M2968.5 615H2972.5" stroke="#8a8d96"/><text x="2975" y="619.0">0</text><path d="M469.5 623.5V627" stroke="#8a8d96"/><text x="469.5" y="638.5" text-anchor="middle">7</text><path d="M559.5 623.5V627" stroke="#8a8d96"/><text x="559.5" y="638.5" text-anchor="middle">7</text><path d="M649.5 623.5V627" stroke="#8a8d96"/><text x="649.5" y="638.5" text-anchor="middle">7</text><path d="M739.5 623.5V627" stroke="#8a8d96"/><text x="739.5" y="638.5" text-anchor="middle">7</text><path d="M829.5 623.5V627" stroke="#8a8d96"/><text x="829.5" y="638.5" text-anchor="middle">7</text><path d="M919.5 623.5V627" stroke="#8a8d96"/><text x="919.5" y="638.5" text-anchor="middle">7</text><path d="M1009.5 623.5V627" stroke="#8a8d96"/><text x="1009.5" y="638.5" text-anchor="middle">7</text><path d="M1099.5 623.5V627" stroke="#8a8d96"/><text x="1099.5" y="638.5" text-anchor="middle">7</text><path d="M1189.5 623.5V627" stroke="#8a8d96"/><text x="1189.5" y="638.5" text-anchor="middle">7</text><path d="M1279.5 623.5V627" stroke="#8a8d96"/><text x="1279.5" y="638.5" text-anchor="middle">7</text><path d="M1369.5 623.5V627" stroke="#8a8d96"/><text x="1369.5" y="638.5" text-anchor="middle">7</text><path d="M1459.5 623.5V627" stroke="#8a8d96"/><text x="1459.5" y="638.5" text-anchor="middle">7</text><path d="M1549.5 623.5V627" stroke="#8a8d96"/><text x="1549.5" y="638.5" text-anchor="middle">7</text><path d="M1639.5 623.5V627" stroke="#8a8d96"/><text x="1639.5" y="638.5" text-anchor="middle">7</text><path d="M1729.5 623.5V627" stroke="#8a8d96"/><text x="1729.5" y="638.5" text-anchor="middle">7</text><path d="M1819.5 623.5V627" stroke="#8a8d96"/><text x="1819.5" y="638.5" text-anchor="middle">7</text><path d="M1909.5 623.5V627" stroke="#8a8d96"/><text x="1909.5" y="638.5" text-anchor="middle">7</text><path d="M1999.5 623.5V627" stroke="#8a8d96"/><text x="1999.5" y="638.5" text-anchor="middle">7</text><path d="M2089.5 623.5V627" stroke="#8a8d96"/><text x="2089.5" y="638.5" text-anchor="middle">7</text><path d="M2179.5 623.5V627" stroke="#8a8d96"/><text x="2179.5" y="638.5" text-anchor="middle">7</text><path d="M2269.5 623.5V627" stroke="#8a8d96"/><text x="2269.5" y="638.5" text-anchor="middle">7</text><path d="M2359.5 623.5V627" stroke="#8a8d96"/><text x="2359.5" y="638.5" text-anchor="middle">7</text><path d="M2449.5 623.5V627" stroke="#8a8d96"/><text x="2449.5" y="638.5" text-anchor="middle">7</text><path d="M2539.5 623.5V627" stroke="#8a8d96"/><text x="2539.5" y="638.5" text-anchor="middle">7</text><path d="M2629.5 623.5V627" stroke="#8a8d96"/><text x="2629.5" y="638.5" text-anchor="middle">7</text><path d="M2719.5 623.5V627" stroke="#8a8d96"/><text x="2719.5" y="638.5" text-anchor="middle">7</text><path d="M2809.5 623.5V627" stroke="#8a8d96"/><text x="2809.5" y="638.5" text-anchor="middle">7</text><path d="M2947.5 623.5V627" stroke="#8a8d96"/><text x="2947.5" y="638.5" text-anchor="middle">8</text></g><rect x="2968" y="199" width="70" height="16" fill="#53b987"/><text x="2973" y="211.3" font-family="Liberation Sans, sans-serif" font-size="11.5" font-weight="bold" fill="#ffffff">28082.1200</text><g font-family="Liberation Sans, sans-serif" font-size="14.5"><rect x="412.5" y="207.5" width="11" height="11" fill="none" stroke="#7b7f8a"/><path d="M418 208V218M413 213H423" stroke="#7b7f8a"/><text x="431.5" y="219" fill="#7b7f8a">開=</text><text x="453" y="219" fill="#53b987">27902.3000</text><text x="540.5" y="219" fill="#7b7f8a">高=</text><text x="564" y="219" fill="#53b987">27902.3000</text><text x="649.5" y="219" fill="#7b7f8a">低=</text><text x="674" y="219" fill="#53b987">27902.3000</text><text x="758.5" y="219" fill="#7b7f8a">收=</text><text x="783" y="219" fill="#53b987">28082.1200</text></g><circle cx="436.5" cy="591.5" r="15.5" fill="#2a2e39"/><path d="M426 596.5C425.5 593 427 590.5 430 590C430.5 587 433 585 436 585C439.5 585 441.5 587.5 442 590.5C445 591 447.2 593 447.2 595.5C447.2 597 446.5 597.6 445 597.6H427.5C426.5 597.6 426 597.2 426 596.5Z" fill="#3fa9ee"/><path d="M425.5 596L434 589L439.1 594.8L445.5 588.5" fill="none" stroke="#2a2e39" stroke-width="1.4"/><text x="463" y="596.5" font-family="Liberation Sans, sans-serif" font-size="14" fill="#3d9de8" stroke="#1f2330" stroke-width="3" paint-order="stroke">Chart by TradingView</text><g font-family="Liberation Sans, sans-serif"><text x="416" y="174" font-size="14.5" font-weight="bold" fill="#d1d4dc">BTC/USDT</text><text x="518.5" y="176" font-size="17" fill="#8c8f98">天</text><text x="624" y="174" font-size="14" fill="#8c8f98">比較</text><text x="702" y="174" font-size="14" fill="#8c8f98">模板</text><text x="752" y="172.8" font-size="13.5" fill="#5e6a98">1min</text><text x="803" y="172.8" font-size="13.5" fill="#5e6a98">5min</text><text x="855" y="172.8" font-size="13.5" fill="#2962ff">15min</text><text x="913.5" y="172.8" font-size="13.5" fill="#5e6a98">30min</text><text x="973" y="172.8" font-size="13.5" fill="#5e6a98">1H</text><text x="1011" y="172.8" font-size="13.5" fill="#5e6a98">4H</text><text x="1051" y="172.8" font-size="13.5" fill="#5e6a98">1D</text><text x="1090" y="172.8" font-size="13.5" fill="#5e6a98">1W</text></g><g fill="none" stroke="#8c8f98" stroke-width="1.2"><rect x="559.5" y="161.5" width="4.5" height="13.5"/><path d="M561.7 157.5V161.5M561.7 175V178"/><rect x="567.5" y="164.5" width="4.3" height="7.7"/><path d="M569.6 161V164.5M569.6 172.2V175.5"/></g><g fill="none" stroke="#8c8f98" stroke-width="1.2"><ellipse cx="604.5" cy="161.2" rx="1.2" ry="2.9"/><path d="M604.5 164.2V165.3"/><path d="M604.5 165.3L606.9 167.6L604.5 170L602.1 167.6Z"/><path d="M595.8 167.3H602M607 167.3H613"/><path d="M596.3 167.3L592.8 173.5M596.3 167.3L599.8 173.5M612.6 167.3L609.1 173.5M612.6 167.3L616.1 173.5"/><path d="M592.5 173.3H600C600 175.6 598.5 177 596.3 177C594 177 592.5 175.6 592.5 173.3Z"/><path d="M608.8 173.3H616.3C616.3 175.6 614.8 177 612.6 177C610.3 177 608.8 175.6 608.8 173.3Z"/></g><g fill="none" stroke="#8c8f98" stroke-width="1.2"><path d="M674 164.2L679.2 160.3L687.6 164.6L692.8 159.2"/><path d="M674 170.6L679.2 166.8L687.6 170.3L692.8 164.5"/><path d="M674.2 176V175M677.5 176V171.5M680.5 176V170.5M683.8 176V172.5M687.2 176V174M690.3 176V169.5M693 176V169.5" stroke-width="1"/></g><g fill="#5e6a98"><circle cx="1139" cy="168" r="6.5"/><rect x="1137" y="159.5" width="4" height="4" transform="rotate(0 1139 168)"/><rect x="1137" y="159.5" width="4" height="4" transform="rotate(45 1139 168)"/><rect x="1137" y="159.5" width="4" height="4" transform="rotate(90 1139 168)"/><rect x="1137" y="159.5" width="4" height="4" transform="rotate(135 1139 168)"/><rect x="1137" y="159.5" width="4" height="4" transform="rotate(180 1139 168)"/><rect x="1137" y="159.5" width="4" height="4" transform="rotate(225 1139 168)"/><rect x="1137" y="159.5" width="4" height="4" transform="rotate(270 1139 168)"/><rect x="1137" y="159.5" width="4" height="4" transform="rotate(315 1139 168)"/></g><circle cx="1139" cy="168" r="2.5" fill="#131722"/><g fill="#5e6a98"><rect x="1171.5" y="171" width="1.8" height="4.5"/><rect x="1174.5" y="169" width="1.8" height="6.5"/><rect x="1177.5" y="171" width="1.8" height="4.5"/><rect x="1180.5" y="167" width="1.8" height="8.5"/><rect x="1183.5" y="170" width="1.8" height="5.5"/><rect x="1186.5" y="165" width="1.8" height="10.5"/></g><path d="M1171.5 167L1175 164.5L1177.5 166L1181 163.5L1183.5 165L1188 161" fill="none" stroke="#5e6a98" stroke-width="1.1"/><g fill="none" stroke="#7d828d" stroke-width="1.1"><path d="M2929 164H2933L2935 161.5H2942L2944 164H2948.5V176.5H2929Z" stroke-linejoin="round"/><circle cx="2938.7" cy="169.5" r="3.8"/></g><g fill="none" stroke="#7d828d" stroke-width="1.1"><circle cx="2981" cy="168.5" r="2"/><path d="M2979.5 159.5h3l0.5 2.2 1.8 0.8 2-1.2 2.1 2.1-1.2 2 0.8 1.8 2.2 0.5v3l-2.2 0.5-0.8 1.8 1.2 2-2.1 2.1-2-1.2-1.8 0.8-0.5 2.2h-3l-0.5-2.2-1.8-0.8-2 1.2-2.1-2.1 1.2-2-0.8-1.8-2.2-0.5v-3l2.2-0.5 0.8-1.8-1.2-2 2.1-2.1 2 1.2 1.8-0.8z"/></g><g fill="none" stroke="#7d828d" stroke-width="1.1"><path d="M3012 166V160H3018M3012 160L3017 165"/><path d="M3027 166V160H3021M3027 160L3022 165"/><path d="M3012 170V176H3018M3012 176L3017 171"/><path d="M3027 170V176H3021M3027 176L3022 171"/></g><g stroke="#3db3e8" stroke-width="1.2"><path d="M374.5 162V169.8M374.5 177.2V185M363 173.5H370.8M378.2 173.5H386"/></g><g fill="none" stroke="#8a8e99" stroke-width="1.1"><circle cx="365.8" cy="217.5" r="1.8"/><circle cx="382.5" cy="200.8" r="1.8"/><path d="M367 216.3L381.3 202"/><circle cx="365.5" cy="242.5" r="1.9"/><circle cx="365.5" cy="253.3" r="1.9"/><circle cx="376.5" cy="253.3" r="1.9"/><path d="M366.9 241.1L373.9 234M366.9 251.9L379.8 239.2M377.9 251.9L384.9 245.6M366.9 243.9L371.8 248.6"/><path d="M362.3 289.6C364.5 284 368.5 279.5 374.5 278.3C376.3 281 375.8 285 373.8 287.8C370 289.3 366 289.6 362.3 289.6Z"/><path d="M376.6 275C376.8 278 378.5 279.5 380 279.2C382.5 278.5 385.5 275.5 387.7 273.1"/><path d="M368 310.5V308.5H381V310.5M374.5 308.5V325.5M371.5 325.5H377.5"/><circle cx="365.5" cy="361.6" r="1.9"/><circle cx="368.2" cy="344.1" r="1.9"/><circle cx="372.4" cy="351.1" r="1.9"/><circle cx="380.7" cy="345.2" r="1.9"/><circle cx="383.4" cy="358.1" r="1.9"/><path d="M365.8 359.7L367.9 346M369.2 345.8L371.4 349.4M374 350L379.1 346.3M381.1 347.1L383 356.2M366.7 360.1L371.2 352.6M374 352.1L381.8 357"/><circle cx="364.5" cy="379" r="1.8"/><circle cx="364.5" cy="388" r="1.8"/><circle cx="364.5" cy="397" r="1.8"/><circle cx="384.5" cy="388" r="1.8"/><path d="M366.5 379H385M366.5 388H382.5M366.5 397H385M374.5 381V395M372 383L374.5 380.5L377 383M372 393L374.5 395.5L377 393"/></g><path d="M373 419L366.8 425.5L373 432M367.5 425.5H381" fill="none" stroke="#8796ad" stroke-width="3" stroke-linecap="round" stroke-linejoin="round"/><path d="M348 449.5H399.5M348 534.5H399.5" stroke="#2a2e39" stroke-width="1"/><g fill="none" stroke="#8a8e99" stroke-width="1.1"><path d="M363 480L379 464L384 469L368 485Z"/><path d="M367 476L369 478M370 473L373 476M373 470L375 472M376 467L379 470"/><circle cx="372.5" cy="508" r="6.8"/><path d="M377.5 513L382 517.5M372.5 504.5V511.5M369 508H376"/><path d="M365.5 567.5V557.5C365.5 553 369 549.5 373.5 549.5C378 549.5 381.5 553 381.5 557.5V567.5H377.5V557.5C377.5 555.3 375.7 553.5 373.5 553.5C371.3 553.5 369.5 555.3 369.5 557.5V567.5Z"/><path d="M365.5 563.5H369.5M377.5 563.5H381.5"/><path d="M363 597L376 584L379.5 587.5L366.5 600.5H363Z"/><path d="M374 586L377.5 589.5"/><rect x="377.5" y="594" width="8" height="6.5"/><path d="M379 594V591.5C379 589.5 380 588.5 381.5 588.5C383 588.5 384 589.5 384 591"/></g><path d="M369 624V619C369 616 371.5 614.5 374 614.5C376.5 614.5 379 616 379 619" fill="none" stroke="#8a8e99" stroke-width="1.1"/><rect x="348" y="625" width="52" height="24" fill="#67707e"/><rect x="366" y="628" width="15" height="13" rx="2" fill="none" stroke="#9a9da6" stroke-width="1.1"/><path d="M366 633L374 641L382 633" fill="none" stroke="#131722" stroke-width="1.8"/><rect x="396.5" y="555" width="8" height="30" rx="4" fill="#131722" stroke="#3a3e4a"/><path d="M401.5 566.5L399 570L401.5 573.5" fill="none" stroke="#8a8e99"/></svg><div style="position:absolute;left:348px;top:669px;width:2697px;height:40px;border-radius:6px;background:linear-gradient(to right,#28b52f 0%,#29b22f 45%,#dd295f 100%)"></div><div style="position:absolute;left:348px;top:719px;width:2697px;height:181px;border-radius:6px;background:#fff"></div><div style="position:absolute;left:914px;top:719px;width:201px;height:3px;border-radius:2px;background:linear-gradient(to right,#44b14b,rgba(68,177,75,0))"></div><div style="position:absolute;left:2280px;top:719px;width:199px;height:3px;border-radius:2px;background:linear-gradient(to left,#ff1a1a,rgba(255,26,26,0))"></div><div class="btn" style="left:1172px;width:86px"><span>10 USDT</span></div><div class="btn" style="left:1275px;width:85px"><span>20 USDT</span></div><div class="btn" style="left:1377px;width:86px"><span>30 USDT</span></div><div class="btn" style="left:1480px;width:84px"><span>40 USDT</span></div><div class="btn" style="left:1582px;width:85px"><span>50 USDT</span></div><div class="btn" style="left:1685px;width:93px"><span>100 USDT</span></div><div class="btn" style="left:1795px;width:93px"><span>200 USDT</span></div><div class="btn" style="left:1905px;width:93px"><span>500 USDT</span></div><div class="btn" style="left:2015px;width:101px"><span>1000 USDT</span></div><div class="btn" style="left:2133px;width:101px"><span>2000 USDT</span></div><div class="bigbtn" style="left:492px;width:1071px;background:#4caf50"></div><div class="bigbtn" style="left:1830px;width:1071px;background:#f44336"></div><div style="position:absolute;left:1666px;top:841px;font-family:'Liberation Serif',serif;font-weight:bold;white-space:nowrap;line-height:1"><span style="font-size:40px;color:#21d396">V</span><span style="font-size:34px;color:#ff9800;margin-left:-3px">S</span></div><div class="th" style="left:508px">合约期数</div><div class="th" style="left:854.5px">开仓金额</div><div class="th" style="left:1197px">期权方向</div><div class="th" style="left:1540px">交割结果</div><div class="th" style="left:1883px">交割数量</div><div class="th" style="left:2226px">开仓手续费</div><div class="th" style="left:2570px">波场点数</div><div class="th" style="left:2912.6px">交易时间</div><div class="td" style="left:508px;top:951.5px">101</div><div class="td" style="left:854.5px;top:951.5px">100</div><div class="td" style="left:1197px;top:951.5px">看涨</div><div class="td" style="left:1540px;top:951.5px">涨</div><div class="td" style="left:1883px;top:951.5px">1</div><div class="td" style="left:2226px;top:951.5px">0</div><div class="td" style="left:2570px;top:951.5px">0</div><div class="td" style="left:2912.6px;top:951.5px">2022-08-29 19:58:50</div><div class="td" style="left:508px;top:1005.3px">99</div><div class="td" style="left:854.5px;top:1005.3px">100</div><div class="td" style="left:1197px;top:1005.3px">看涨</div><div class="td" style="left:1540px;top:1005.3px">涨</div><div class="td" style="left:1883px;top:1005.3px">1</div><div class="td" style="left:2226px;top:1005.3px">0</div><div class="td" style="left:2570px;top:1005.3px">0</div><div class="td" style="left:2912.6px;top:1005.3px">2022-08-29 19:55:25</div><div class="td" style="left:508px;top:1059.1px">212</div><div class="td" style="left:854.5px;top:1059.1px">40</div><div class="td" style="left:1197px;top:1059.1px">看涨</div><div class="td" style="left:1540px;top:1059.1px">跌</div><div class="td" style="left:1883px;top:1059.1px">-0.4</div><div class="td" style="left:2226px;top:1059.1px">0</div><div class="td" style="left:2570px;top:1059.1px">0</div><div class="td" style="left:2912.6px;top:1059.1px">2022-08-18 18:15:28</div><div class="t" style="left:94.60px;top:10.00px;font-size:20.5px;color:#ececec;font-weight:normal;transform:scaleX(0.7961);transform-origin:0 0;letter-spacing:2.5px">Bico Global</div><div class="t" style="left:231.60px;top:14.00px;font-size:14px;color:#cdcfd4;font-weight:normal;">行 情</div><div class="t" style="left:286.00px;top:15.00px;font-size:14px;color:#cdcfd4;font-weight:normal;">买 币</div><div class="t" style="left:367.00px;top:14.00px;font-size:14px;color:#cdcfd4;font-weight:normal;">现货市场</div><div class="t" style="left:471.00px;top:14.00px;font-size:14px;color:#cdcfd4;font-weight:normal;">合约交易</div><div class="t" style="left:575.20px;top:14.00px;font-size:14px;color:#cdcfd4;font-weight:normal;">期权交易</div><div class="t" style="left:679.00px;top:14.00px;font-size:14px;color:#cdcfd4;font-weight:normal;">金融服务</div><div class="t" style="left:782.00px;top:14.00px;font-size:14px;color:#cdcfd4;font-weight:normal;">更 多</div><div class="t" style="left:342.41px;top:81.00px;font-size:16px;color:#17b57a;font-weight:normal;transform:scaleX(0.8424);transform-origin:0 0;">BTC/USDT</div><div class="t" style="left:440.00px;top:81.00px;font-size:16px;color:#3f4169;font-weight:normal;transform:scaleX(0.8500);transform-origin:0 0;">AT/USDT</div><div class="t" style="left:527.78px;top:81.00px;font-size:16px;color:#3f4169;font-weight:normal;transform:scaleX(0.8589);transform-origin:0 0;">ETH/USDT</div><div class="t" style="left:626.41px;top:81.00px;font-size:16px;color:#3f4169;font-weight:normal;transform:scaleX(0.8451);transform-origin:0 0;">EOS/USDT</div><div class="t" style="left:725.97px;top:81.00px;font-size:16px;color:#3f4169;font-weight:normal;transform:scaleX(0.8697);transform-origin:0 0;">BCH/USDT</div><div class="t" style="left:827.41px;top:81.00px;font-size:16px;color:#3f4169;font-weight:normal;transform:scaleX(0.8462);transform-origin:0 0;">LTC/USDT</div><div class="t" style="left:921.82px;top:81.00px;font-size:16px;color:#3f4169;font-weight:normal;transform:scaleX(0.8361);transform-origin:0 0;">ETC/USDT</div><div class="t" style="left:1020.00px;top:81.00px;font-size:16px;color:#3f4169;font-weight:normal;transform:scaleX(0.8254);transform-origin:0 0;">XRP/USDT</div><div class="t" style="left:1117.58px;top:81.00px;font-size:16px;color:#3f4169;font-weight:normal;transform:scaleX(0.8671);transform-origin:0 0;">FIL/USDT</div><div class="t" style="left:998.00px;top:855.10px;font-size:14px;color:#ffffff;font-weight:normal;">看涨</div><div class="t" style="left:1030.54px;top:854.00px;font-size:16px;color:#ffffff;font-weight:normal;transform:scaleX(0.9026);transform-origin:0 0;">80S</div><div class="t" style="left:2336.00px;top:855.10px;font-size:14px;color:#ffffff;font-weight:normal;">看跌</div><div class="t" style="left:2368.59px;top:854.00px;font-size:16px;color:#ffffff;font-weight:normal;transform:scaleX(0.9026);transform-origin:0 0;">80S</div><div class="t" style="left:1578.00px;top:807.00px;font-size:14px;color:#55586e;font-weight:normal;">我的额度：</div><div class="t" style="left:1648.65px;top:805.00px;font-size:16px;color:#3e4160;font-weight:normal;transform:scaleX(0.8534);transform-origin:0 0;">10000003.00000000 USDT</div><div class="t" style="left:1647.50px;top:681.00px;font-size:14px;color:#50508a;font-weight:normal;opacity:0.95">暂无期权秒合约</div><svg style="position:absolute;left:3345px;top:1061px" width="50" height="50" viewBox="0 0 50 50"><path d="M8 22C8 12 15 4 25 4C35 4 42 12 42 22" fill="none" stroke="#1a44e6" stroke-width="4"/><rect x="2" y="20" width="8" height="18" rx="1.5" fill="#1a44e6"/><rect x="40" y="20" width="8" height="18" rx="1.5" fill="#1a44e6"/><path d="M15 27H35C35 33 30.5 36 25 36C19.5 36 15 33 15 27Z" fill="#1a44e6"/><path d="M44 37C43 42 38 44.5 32 45" fill="none" stroke="#1a44e6" stroke-width="2.5"/><rect x="18" y="42" width="12" height="6" rx="1.5" fill="#1a44e6"/></svg><div style="position:absolute;left:3339px;top:1135px;width:60px;height:60px;border-radius:50%;background:#2200e4;box-shadow:0 6px 10px rgba(0,0,0,0.35)"></div><svg style="position:absolute;left:3350px;top:1146px" width="40" height="40" viewBox="0 0 40 40"><path d="M12 6H28C31.5 6 34 8.5 34 12V24C34 27.5 31.5 30 28 30H23L16 35.5V30H12C8.5 30 6 27.5 6 24V12C6 8.5 8.5 6 12 6Z" fill="none" stroke="#fff" stroke-width="3.6" stroke-linejoin="round"/><circle cx="13.5" cy="18.5" r="2.3" fill="#fff"/><circle cx="20" cy="18.5" r="2.3" fill="#fff"/><circle cx="26.5" cy="18.5" r="2.3" fill="#fff"/></svg></body></html>
